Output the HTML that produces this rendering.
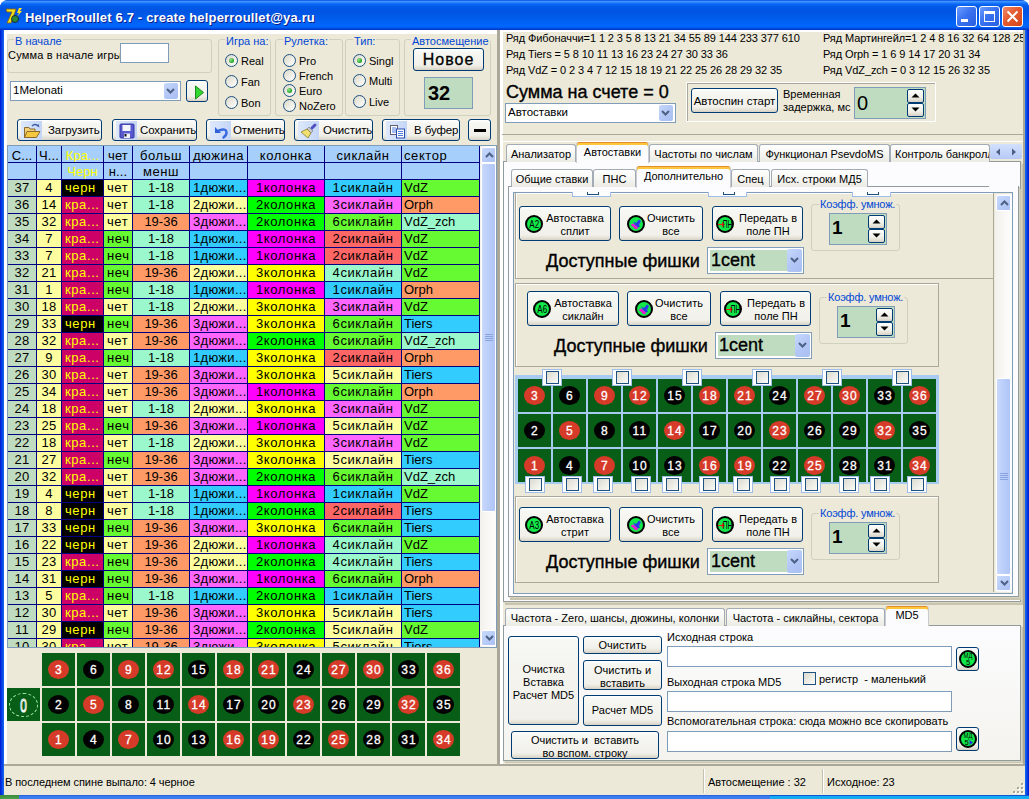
<!DOCTYPE html><html><head><meta charset="utf-8"><style>*{margin:0;padding:0;box-sizing:border-box}
html,body{width:1029px;height:799px;overflow:hidden;background:#fff}
body{position:relative;font-family:"Liberation Sans",sans-serif;font-size:11px;color:#000}
.a{position:absolute}
.t{white-space:nowrap;line-height:1}
.btn{border:1px solid #003c74;border-radius:3px;background:linear-gradient(#ffffff 0,#f7f7f3 3px,#f1f0ea calc(100% - 5px),#e4e0d5 calc(100% - 2px),#d6d0c5 100%)}
.fc{display:flex;align-items:center;justify-content:center;text-align:center}
.grp{border:1px solid #d0d0bf;border-radius:3px}
.gl{background:#ece9d8;color:#0046d5;padding:0 1px}
.edit{background:#fff;border:1px solid #7f9db9}
.rad{width:13px;height:13px;border-radius:50%;border:1px solid #1c5180;background:linear-gradient(135deg,#dcd9c9,#fff)}
.rad.on::after{content:"";position:absolute;left:3px;top:3px;width:5px;height:5px;border-radius:50%;background:radial-gradient(circle at 35% 35%,#8fe58f,#21a121 70%,#1a861a)}
.dd{background:linear-gradient(135deg,#c6d8fc,#b4c8f6 50%,#a8bff2);border-radius:2px}
.tab{border:1px solid #a3acb4;border-bottom:none;border-radius:3px 3px 0 0;background:linear-gradient(#fff,#f4f4f0 60%,#ebeae3)}
.tab.on{border-top:none;border-color:#c8ccd0;background:#fcfcfe;box-shadow:inset 0 1px 0 #e68b2c, inset 0 3px 0 #ffc83c}
</style></head><body><div class="a" style="left:0;top:0;width:1029px;height:799px;border-radius:8px 8px 0 0;background:linear-gradient(90deg,#0019cf,#0842e8 2px,#166aee 4px,#166aee 1025px,#0842e8 1027px,#0019cf)"></div>
<div class="a " style="left:0px;top:0px;width:1029px;height:30px;border-radius:8px 8px 0 0;background:linear-gradient(#0a48dc 0px,#3d95ff 1.5px,#2a84ff 2.5px,#0a68f6 4px,#0058e6 7px,#0055e2 12px,#005cec 18px,#0064f8 23px,#0066fc 27px,#0040d4 29px,#0030c4 30px)"></div>
<div class="a " style="left:0px;top:795px;width:1029px;height:4px;background:linear-gradient(#2458d8,#3b7ef0 40%,#3a7cec)"></div>
<div class="a " style="left:770px;top:795px;width:259px;height:4px;background:linear-gradient(#0a58d4 0,#0a58d4 1px,#12a8f2 1px,#16acf4)"></div>
<div class="a " style="left:0px;top:795px;width:19px;height:4px;background:linear-gradient(#3c8a3c,#4aa04a)"></div>
<svg class="a" style="left:5px;top:7px" width="18" height="18" viewBox="0 0 18 18">
<path d="M1 2 L11 2 L10 5 L6 16 L2 16 L7 5 L2 5 Z" fill="#f2e21a" stroke="#8a5a10" stroke-width="0.8"/>
<circle cx="10" cy="12" r="3.5" fill="#2a8a3a" stroke="#113" stroke-width="0.8"/>
<path d="M14 1 L12 6 L14 6 L12 10 L17 4 L15 4 L17 1Z" fill="#ffe020"/>
</svg>
<div class="a t " style="left:25px;top:11px;color:#fff;font-weight:bold;font-size:13px;letter-spacing:0.17px;text-shadow:1px 1px 0 #0a1e8c">HelperRoullet 6.7 - create helperroullet@ya.ru</div>
<div class="a " style="left:956px;top:6px;width:21px;height:21px;border:1px solid #fff;border-radius:3px;background:linear-gradient(135deg,#6a9cff,#3a72f0 45%,#2a5ee0)"><div class="a" style="left:4px;top:12px;width:7px;height:3px;background:#fff"></div></div>
<div class="a " style="left:979px;top:6px;width:21px;height:21px;border:1px solid #fff;border-radius:3px;background:linear-gradient(135deg,#6a9cff,#3a72f0 45%,#2a5ee0)"><div class="a" style="left:4px;top:4px;width:11px;height:11px;border:1px solid #fff;border-top:3px solid #fff"></div></div>
<div class="a " style="left:1002px;top:6px;width:21px;height:21px;border:1px solid #fff;border-radius:3px;background:linear-gradient(135deg,#f08a6a,#e45a2e 45%,#d4461a)"><svg width="21" height="21" style="position:absolute;left:0;top:0"><path d="M4.5 4.5 L14.5 14.5 M14.5 4.5 L4.5 14.5" stroke="#fff" stroke-width="2"/></svg></div>
<div class="a " style="left:4px;top:30px;width:1021px;height:765px;background:#ece9d8"></div>
<div class="a " style="left:4px;top:30px;width:496px;height:4px;background:#fff"></div>
<div class="a " style="left:4px;top:30px;width:3px;height:736px;background:#fff"></div>
<div class="a " style="left:497px;top:30px;width:3px;height:736px;background:#aca899"></div>
<div class="a " style="left:4px;top:764px;width:496px;height:2px;background:#aca899"></div>
<div class="a " style="left:500px;top:30px;width:3px;height:736px;background:#fff"></div>
<div class="a " style="left:500px;top:30px;width:525px;height:2px;background:#fff"></div>
<div class="a grp" style="left:7px;top:39px;width:205px;height:34px;"></div>
<div class="a t gl" style="left:14px;top:35px;font-size:11px;line-height:12px">В начале</div>
<div class="a t " style="left:8px;top:49px;font-size:11px;line-height:12px;letter-spacing:0.2px">Сумма в начале игры</div>
<div class="a edit" style="left:120px;top:43px;width:49px;height:20px;"></div>
<div class="a " style="left:10px;top:81px;width:171px;height:20px;background:#fff;border:1px solid #7f9db9"></div>
<div class="a t " style="left:13px;top:85.0px;font-size:11.5px">1Melonati</div>
<div class="a dd" style="left:164px;top:83px;width:14px;height:16px;"><svg class="a" style="left:2px;top:5px" width="9" height="6"><path d="M1 1 L4.5 4.5 L8 1" stroke="#4d6185" stroke-width="2" fill="none"/></svg></div>
<div class="a btn" style="left:186px;top:80px;width:22px;height:22px;"><svg class="a" style="left:8px;top:4px" width="10" height="15"><path d="M0.5 1 L8.5 7.5 L0.5 14 Z" fill="#33d633" stroke="#1a8a1a" stroke-width="1"/></svg></div>
<div class="a grp" style="left:218px;top:39px;width:53px;height:77px;"></div>
<div class="a t gl" style="left:225px;top:35px;font-size:11px;line-height:12px">Игра на:</div>
<div class="a grp" style="left:275px;top:39px;width:68px;height:77px;"></div>
<div class="a t gl" style="left:283px;top:35px;font-size:11px;line-height:12px">Рулетка:</div>
<div class="a grp" style="left:345px;top:39px;width:55px;height:77px;"></div>
<div class="a t gl" style="left:353px;top:35px;font-size:11px;line-height:12px">Тип:</div>
<div class="a grp" style="left:404px;top:39px;width:87px;height:77px;"></div>
<div class="a t gl" style="left:411px;top:35px;font-size:11px;line-height:12px">Автосмещение</div>
<div class="a rad on" style="left:225px;top:54px;width:13px;height:13px;"></div>
<div class="a t " style="left:241px;top:56px;font-size:11px">Real</div>
<div class="a rad" style="left:225px;top:75px;width:13px;height:13px;"></div>
<div class="a t " style="left:241px;top:77px;font-size:11px">Fan</div>
<div class="a rad" style="left:225px;top:96px;width:13px;height:13px;"></div>
<div class="a t " style="left:241px;top:98px;font-size:11px">Bon</div>
<div class="a rad" style="left:283px;top:54px;width:13px;height:13px;"></div>
<div class="a t " style="left:299px;top:56px;font-size:11px">Pro</div>
<div class="a rad" style="left:283px;top:69px;width:13px;height:13px;"></div>
<div class="a t " style="left:299px;top:71px;font-size:11px">French</div>
<div class="a rad on" style="left:283px;top:84px;width:13px;height:13px;"></div>
<div class="a t " style="left:299px;top:86px;font-size:11px">Euro</div>
<div class="a rad" style="left:283px;top:99px;width:13px;height:13px;"></div>
<div class="a t " style="left:299px;top:101px;font-size:11px">NoZero</div>
<div class="a rad on" style="left:353px;top:54px;width:13px;height:13px;"></div>
<div class="a t " style="left:369px;top:56px;font-size:11px">Singl</div>
<div class="a rad" style="left:353px;top:74px;width:13px;height:13px;"></div>
<div class="a t " style="left:369px;top:76px;font-size:11px">Multi</div>
<div class="a rad" style="left:353px;top:95px;width:13px;height:13px;"></div>
<div class="a t " style="left:369px;top:97px;font-size:11px">Live</div>
<div class="a btn fc" style="left:413px;top:48px;width:71px;height:23px;font-size:16px;letter-spacing:1px;padding-top:1px;-webkit-text-stroke:0.3px #000">Новое</div>
<div class="a " style="left:424px;top:77px;width:49px;height:32px;background:#c0dcc0;border:1px solid #7f9db9"></div>
<div class="a t " style="left:428px;top:83px;font-size:20px;font-weight:bold">32</div>
<div class="a btn" style="left:17px;top:119px;width:85px;height:22px;"><div class="a" style="left:3px;top:1px;width:21px;height:19px;background:linear-gradient(90deg,#dde8fb,#c4d6f6);display:flex;align-items:center;justify-content:center"><svg width="18" height="16" viewBox="0 0 18 16"><path d="M1.5 4.5 L6 4.5 L7 6 L12 6 L12 14.5 L1.5 14.5Z" fill="#f0d070" stroke="#8a6a30" stroke-width="1"/><path d="M4 8.5 L17 8.5 L13.5 14.5 L1.5 14.5Z" fill="#f6c840" stroke="#8a6a30" stroke-width="1"/><path d="M9 3 Q12 0 15 3" stroke="#3a5aa0" stroke-width="1.3" fill="none"/><path d="M13.5 2.5 L16.5 4.5 L15.5 1Z" fill="#3a5aa0"/></svg></div><div class="a t" style="left:30px;top:5px;font-size:11.5px;letter-spacing:-0.1px">Загрузить</div></div>
<div class="a btn" style="left:112px;top:119px;width:85px;height:22px;"><div class="a" style="left:3px;top:1px;width:21px;height:19px;background:linear-gradient(90deg,#dde8fb,#c4d6f6);display:flex;align-items:center;justify-content:center"><svg width="20" height="19" viewBox="0 0 20 19"><rect x="3" y="3" width="14" height="14" rx="1" fill="#5a5ad0" stroke="#3434a0" stroke-width="1"/><rect x="5.5" y="4" width="8" height="6" fill="#f4f4fc"/><rect x="7" y="12.5" width="6" height="4.5" fill="#f0f0f8"/><rect x="7.5" y="13" width="2" height="2.5" fill="#111"/></svg></div><div class="a t" style="left:27px;top:5px;font-size:11.5px;letter-spacing:-0.1px">Сохранить</div></div>
<div class="a btn" style="left:206px;top:119px;width:79px;height:22px;"><div class="a" style="left:3px;top:1px;width:21px;height:19px;background:linear-gradient(90deg,#dde8fb,#c4d6f6);display:flex;align-items:center;justify-content:center"><svg width="20" height="19" viewBox="0 0 20 19"><path d="M8 9.5 Q15 7 15.5 11 Q16 14 12.5 16.5" stroke="#3a6ae0" stroke-width="2.4" fill="none" stroke-linecap="round"/><path d="M4 6 L4 12 L10 12Z" fill="#3060d8"/></svg></div><div class="a t" style="left:26px;top:5px;font-size:11.5px;letter-spacing:-0.1px">Отменить</div></div>
<div class="a btn" style="left:294px;top:119px;width:79px;height:22px;"><div class="a" style="left:3px;top:1px;width:21px;height:19px;background:linear-gradient(90deg,#dde8fb,#c4d6f6);display:flex;align-items:center;justify-content:center"><svg width="21" height="19" viewBox="0 0 21 19"><path d="M14 7 L17 4" stroke="#5050c0" stroke-width="3" stroke-linecap="round"/><path d="M11 6 L15 10 L13 12 L9 8Z" fill="#c8c8d0" stroke="#707080" stroke-width="0.6"/><path d="M9 8 L13 12 L10 17 L3 11Z" fill="#f0e070" stroke="#8a7a30" stroke-width="0.8"/></svg></div><div class="a t" style="left:28px;top:5px;font-size:11.5px;letter-spacing:-0.1px">Очистить</div></div>
<div class="a btn" style="left:382px;top:119px;width:78px;height:22px;"><div class="a" style="left:3px;top:1px;width:21px;height:19px;background:linear-gradient(90deg,#dde8fb,#c4d6f6);display:flex;align-items:center;justify-content:center"><svg width="21" height="19" viewBox="0 0 21 19"><rect x="4.5" y="4.5" width="7" height="9" fill="#fff" stroke="#606070"/><path d="M6 7 H10 M6 9 H10 M6 11 H10" stroke="#4a7ae0"/><rect x="10.5" y="8" width="8" height="9" fill="#fff" stroke="#2a4ab0"/><path d="M12 10.5 H17 M12 12.5 H17 M12 14.5 H17" stroke="#4a7ae0"/></svg></div><div class="a t" style="left:31px;top:5px;font-size:11.5px;letter-spacing:-0.1px">В буфер</div></div>
<div class="a btn" style="left:468px;top:119px;width:23px;height:22px;"><div class="a" style="left:5px;top:9px;width:12px;height:3px;background:#000"></div></div>
<div class="a" style="left:0;top:0;width:480px;height:647px;overflow:hidden"><div class="a" style="left:8px;top:146px;width:472px;height:501px;background:#000080"></div><div class="a" style="left:8px;top:146px;width:28px;height:16px;background:#a6d0fb;color:#000;font-size:13px;letter-spacing:0.1px;line-height:19px;text-align:center;white-space:nowrap;overflow:hidden">С...</div><div class="a" style="left:8px;top:163px;width:28px;height:16px;background:#a6d0fb;color:#000;font-size:13px;letter-spacing:0.1px;line-height:17px;text-align:center;white-space:nowrap;overflow:hidden"></div><div class="a" style="left:37px;top:146px;width:24px;height:16px;background:#a6d0fb;color:#000;font-size:13px;letter-spacing:0.1px;line-height:19px;text-align:center;white-space:nowrap;overflow:hidden">Ч...</div><div class="a" style="left:37px;top:163px;width:24px;height:16px;background:#a6d0fb;color:#000;font-size:13px;letter-spacing:0.1px;line-height:17px;text-align:center;white-space:nowrap;overflow:hidden"></div><div class="a" style="left:62px;top:146px;width:41px;height:16px;background:#a6d0fb;color:#ffff00;font-size:13px;letter-spacing:0.1px;line-height:19px;text-align:center;white-space:nowrap;overflow:hidden">Кра...</div><div class="a" style="left:62px;top:163px;width:41px;height:16px;background:#a6d0fb;color:#ffff00;font-size:13px;letter-spacing:0.1px;line-height:17px;text-align:center;white-space:nowrap;overflow:hidden">Черн</div><div class="a" style="left:104px;top:146px;width:28px;height:16px;background:#a6d0fb;color:#000;font-size:13px;letter-spacing:0.1px;line-height:19px;text-align:center;white-space:nowrap;overflow:hidden">чет</div><div class="a" style="left:104px;top:163px;width:28px;height:16px;background:#a6d0fb;color:#000;font-size:13px;letter-spacing:0.1px;line-height:17px;text-align:center;white-space:nowrap;overflow:hidden">н...</div><div class="a" style="left:133px;top:146px;width:56px;height:16px;background:#a6d0fb;color:#000;font-size:13px;letter-spacing:0.6px;line-height:19px;text-align:center;white-space:nowrap;overflow:hidden">больш</div><div class="a" style="left:133px;top:163px;width:56px;height:16px;background:#a6d0fb;color:#000;font-size:13px;letter-spacing:0.6px;line-height:17px;text-align:center;white-space:nowrap;overflow:hidden">менш</div><div class="a" style="left:190px;top:146px;width:57px;height:16px;background:#a6d0fb;color:#000;font-size:13px;letter-spacing:0.6px;line-height:19px;text-align:center;white-space:nowrap;overflow:hidden">дюжина</div><div class="a" style="left:190px;top:163px;width:57px;height:16px;background:#a6d0fb;color:#000;font-size:13px;letter-spacing:0.6px;line-height:17px;text-align:center;white-space:nowrap;overflow:hidden"></div><div class="a" style="left:248px;top:146px;width:76px;height:16px;background:#a6d0fb;color:#000;font-size:13px;letter-spacing:0.6px;line-height:19px;text-align:center;white-space:nowrap;overflow:hidden">колонка</div><div class="a" style="left:248px;top:163px;width:76px;height:16px;background:#a6d0fb;color:#000;font-size:13px;letter-spacing:0.6px;line-height:17px;text-align:center;white-space:nowrap;overflow:hidden"></div><div class="a" style="left:325px;top:146px;width:76px;height:16px;background:#a6d0fb;color:#000;font-size:13px;letter-spacing:0.6px;line-height:19px;text-align:center;white-space:nowrap;overflow:hidden">сиклайн</div><div class="a" style="left:325px;top:163px;width:76px;height:16px;background:#a6d0fb;color:#000;font-size:13px;letter-spacing:0.6px;line-height:17px;text-align:center;white-space:nowrap;overflow:hidden"></div><div class="a" style="left:402px;top:146px;width:77px;height:16px;background:#a6d0fb;color:#000;font-size:13px;letter-spacing:0.6px;line-height:19px;text-align:left;padding-left:2px;white-space:nowrap;overflow:hidden">сектор</div><div class="a" style="left:402px;top:163px;width:77px;height:16px;background:#a6d0fb;color:#000;font-size:13px;letter-spacing:0.6px;line-height:17px;text-align:left;padding-left:2px;white-space:nowrap;overflow:hidden"></div><div class="a" style="left:8px;top:180px;width:28px;height:16px;background:#c0dcc0;color:#000;font-size:13px;letter-spacing:0.3px;line-height:16px;text-align:center;white-space:nowrap;overflow:hidden">37</div><div class="a" style="left:37px;top:180px;width:24px;height:16px;background:#ffffa0;color:#000;font-size:13px;letter-spacing:0.3px;line-height:16px;text-align:center;white-space:nowrap;overflow:hidden">4</div><div class="a" style="left:62px;top:180px;width:41px;height:16px;background:#000;color:#ffff00;font-size:13px;letter-spacing:0.6px;line-height:16px;text-align:left;padding-left:3px;white-space:nowrap;overflow:hidden">черн</div><div class="a" style="left:104px;top:180px;width:28px;height:16px;background:#ffffa0;color:#000;font-size:13px;letter-spacing:0.6px;line-height:16px;text-align:left;padding-left:3px;white-space:nowrap;overflow:hidden">чет</div><div class="a" style="left:133px;top:180px;width:56px;height:16px;background:#9af8cc;color:#000;font-size:13px;letter-spacing:0px;line-height:16px;text-align:center;white-space:nowrap;overflow:hidden">1-18</div><div class="a" style="left:190px;top:180px;width:57px;height:16px;background:#33ccfe;color:#000;font-size:13px;letter-spacing:0.3px;line-height:16px;text-align:left;padding-left:3px;white-space:nowrap;overflow:hidden">1дюжи...</div><div class="a" style="left:248px;top:180px;width:76px;height:16px;background:#ff00ff;color:#000;font-size:13px;letter-spacing:0.6px;line-height:16px;text-align:center;white-space:nowrap;overflow:hidden">1колонка</div><div class="a" style="left:325px;top:180px;width:76px;height:16px;background:#33ccfe;color:#000;font-size:13px;letter-spacing:0.6px;line-height:16px;text-align:center;white-space:nowrap;overflow:hidden">1сиклайн</div><div class="a" style="left:402px;top:180px;width:77px;height:16px;background:#66fa33;color:#000;font-size:13px;letter-spacing:0px;line-height:16px;text-align:left;padding-left:2px;white-space:nowrap;overflow:hidden">VdZ</div><div class="a" style="left:8px;top:197px;width:28px;height:16px;background:#c0dcc0;color:#000;font-size:13px;letter-spacing:0.3px;line-height:16px;text-align:center;white-space:nowrap;overflow:hidden">36</div><div class="a" style="left:37px;top:197px;width:24px;height:16px;background:#ffffa0;color:#000;font-size:13px;letter-spacing:0.3px;line-height:16px;text-align:center;white-space:nowrap;overflow:hidden">14</div><div class="a" style="left:62px;top:197px;width:41px;height:16px;background:#cc0066;color:#ffff00;font-size:13px;letter-spacing:0.6px;line-height:16px;text-align:left;padding-left:3px;white-space:nowrap;overflow:hidden">кра...</div><div class="a" style="left:104px;top:197px;width:28px;height:16px;background:#ffffa0;color:#000;font-size:13px;letter-spacing:0.6px;line-height:16px;text-align:left;padding-left:3px;white-space:nowrap;overflow:hidden">чет</div><div class="a" style="left:133px;top:197px;width:56px;height:16px;background:#9af8cc;color:#000;font-size:13px;letter-spacing:0px;line-height:16px;text-align:center;white-space:nowrap;overflow:hidden">1-18</div><div class="a" style="left:190px;top:197px;width:57px;height:16px;background:#ffffa0;color:#000;font-size:13px;letter-spacing:0.3px;line-height:16px;text-align:left;padding-left:3px;white-space:nowrap;overflow:hidden">2дюжи...</div><div class="a" style="left:248px;top:197px;width:76px;height:16px;background:#00ff00;color:#000;font-size:13px;letter-spacing:0.6px;line-height:16px;text-align:center;white-space:nowrap;overflow:hidden">2колонка</div><div class="a" style="left:325px;top:197px;width:76px;height:16px;background:#ff66ff;color:#000;font-size:13px;letter-spacing:0.6px;line-height:16px;text-align:center;white-space:nowrap;overflow:hidden">3сиклайн</div><div class="a" style="left:402px;top:197px;width:77px;height:16px;background:#ff9a66;color:#000;font-size:13px;letter-spacing:0px;line-height:16px;text-align:left;padding-left:2px;white-space:nowrap;overflow:hidden">Orph</div><div class="a" style="left:8px;top:214px;width:28px;height:16px;background:#c0dcc0;color:#000;font-size:13px;letter-spacing:0.3px;line-height:16px;text-align:center;white-space:nowrap;overflow:hidden">35</div><div class="a" style="left:37px;top:214px;width:24px;height:16px;background:#ffffa0;color:#000;font-size:13px;letter-spacing:0.3px;line-height:16px;text-align:center;white-space:nowrap;overflow:hidden">32</div><div class="a" style="left:62px;top:214px;width:41px;height:16px;background:#cc0066;color:#ffff00;font-size:13px;letter-spacing:0.6px;line-height:16px;text-align:left;padding-left:3px;white-space:nowrap;overflow:hidden">кра...</div><div class="a" style="left:104px;top:214px;width:28px;height:16px;background:#ffffa0;color:#000;font-size:13px;letter-spacing:0.6px;line-height:16px;text-align:left;padding-left:3px;white-space:nowrap;overflow:hidden">чет</div><div class="a" style="left:133px;top:214px;width:56px;height:16px;background:#ff9a66;color:#000;font-size:13px;letter-spacing:0px;line-height:16px;text-align:center;white-space:nowrap;overflow:hidden">19-36</div><div class="a" style="left:190px;top:214px;width:57px;height:16px;background:#ff66ff;color:#000;font-size:13px;letter-spacing:0.3px;line-height:16px;text-align:left;padding-left:3px;white-space:nowrap;overflow:hidden">3дюжи...</div><div class="a" style="left:248px;top:214px;width:76px;height:16px;background:#00ff00;color:#000;font-size:13px;letter-spacing:0.6px;line-height:16px;text-align:center;white-space:nowrap;overflow:hidden">2колонка</div><div class="a" style="left:325px;top:214px;width:76px;height:16px;background:#66fa33;color:#000;font-size:13px;letter-spacing:0.6px;line-height:16px;text-align:center;white-space:nowrap;overflow:hidden">6сиклайн</div><div class="a" style="left:402px;top:214px;width:77px;height:16px;background:#9af8cc;color:#000;font-size:13px;letter-spacing:0px;line-height:16px;text-align:left;padding-left:2px;white-space:nowrap;overflow:hidden">VdZ_zch</div><div class="a" style="left:8px;top:231px;width:28px;height:16px;background:#c0dcc0;color:#000;font-size:13px;letter-spacing:0.3px;line-height:16px;text-align:center;white-space:nowrap;overflow:hidden">34</div><div class="a" style="left:37px;top:231px;width:24px;height:16px;background:#ffffa0;color:#000;font-size:13px;letter-spacing:0.3px;line-height:16px;text-align:center;white-space:nowrap;overflow:hidden">7</div><div class="a" style="left:62px;top:231px;width:41px;height:16px;background:#cc0066;color:#ffff00;font-size:13px;letter-spacing:0.6px;line-height:16px;text-align:left;padding-left:3px;white-space:nowrap;overflow:hidden">кра...</div><div class="a" style="left:104px;top:231px;width:28px;height:16px;background:#66fa33;color:#000;font-size:13px;letter-spacing:0.6px;line-height:16px;text-align:left;padding-left:3px;white-space:nowrap;overflow:hidden">неч</div><div class="a" style="left:133px;top:231px;width:56px;height:16px;background:#9af8cc;color:#000;font-size:13px;letter-spacing:0px;line-height:16px;text-align:center;white-space:nowrap;overflow:hidden">1-18</div><div class="a" style="left:190px;top:231px;width:57px;height:16px;background:#33ccfe;color:#000;font-size:13px;letter-spacing:0.3px;line-height:16px;text-align:left;padding-left:3px;white-space:nowrap;overflow:hidden">1дюжи...</div><div class="a" style="left:248px;top:231px;width:76px;height:16px;background:#ff00ff;color:#000;font-size:13px;letter-spacing:0.6px;line-height:16px;text-align:center;white-space:nowrap;overflow:hidden">1колонка</div><div class="a" style="left:325px;top:231px;width:76px;height:16px;background:#ff6666;color:#000;font-size:13px;letter-spacing:0.6px;line-height:16px;text-align:center;white-space:nowrap;overflow:hidden">2сиклайн</div><div class="a" style="left:402px;top:231px;width:77px;height:16px;background:#66fa33;color:#000;font-size:13px;letter-spacing:0px;line-height:16px;text-align:left;padding-left:2px;white-space:nowrap;overflow:hidden">VdZ</div><div class="a" style="left:8px;top:248px;width:28px;height:16px;background:#c0dcc0;color:#000;font-size:13px;letter-spacing:0.3px;line-height:16px;text-align:center;white-space:nowrap;overflow:hidden">33</div><div class="a" style="left:37px;top:248px;width:24px;height:16px;background:#ffffa0;color:#000;font-size:13px;letter-spacing:0.3px;line-height:16px;text-align:center;white-space:nowrap;overflow:hidden">7</div><div class="a" style="left:62px;top:248px;width:41px;height:16px;background:#cc0066;color:#ffff00;font-size:13px;letter-spacing:0.6px;line-height:16px;text-align:left;padding-left:3px;white-space:nowrap;overflow:hidden">кра...</div><div class="a" style="left:104px;top:248px;width:28px;height:16px;background:#66fa33;color:#000;font-size:13px;letter-spacing:0.6px;line-height:16px;text-align:left;padding-left:3px;white-space:nowrap;overflow:hidden">неч</div><div class="a" style="left:133px;top:248px;width:56px;height:16px;background:#9af8cc;color:#000;font-size:13px;letter-spacing:0px;line-height:16px;text-align:center;white-space:nowrap;overflow:hidden">1-18</div><div class="a" style="left:190px;top:248px;width:57px;height:16px;background:#33ccfe;color:#000;font-size:13px;letter-spacing:0.3px;line-height:16px;text-align:left;padding-left:3px;white-space:nowrap;overflow:hidden">1дюжи...</div><div class="a" style="left:248px;top:248px;width:76px;height:16px;background:#ff00ff;color:#000;font-size:13px;letter-spacing:0.6px;line-height:16px;text-align:center;white-space:nowrap;overflow:hidden">1колонка</div><div class="a" style="left:325px;top:248px;width:76px;height:16px;background:#ff6666;color:#000;font-size:13px;letter-spacing:0.6px;line-height:16px;text-align:center;white-space:nowrap;overflow:hidden">2сиклайн</div><div class="a" style="left:402px;top:248px;width:77px;height:16px;background:#66fa33;color:#000;font-size:13px;letter-spacing:0px;line-height:16px;text-align:left;padding-left:2px;white-space:nowrap;overflow:hidden">VdZ</div><div class="a" style="left:8px;top:265px;width:28px;height:16px;background:#c0dcc0;color:#000;font-size:13px;letter-spacing:0.3px;line-height:16px;text-align:center;white-space:nowrap;overflow:hidden">32</div><div class="a" style="left:37px;top:265px;width:24px;height:16px;background:#ffffa0;color:#000;font-size:13px;letter-spacing:0.3px;line-height:16px;text-align:center;white-space:nowrap;overflow:hidden">21</div><div class="a" style="left:62px;top:265px;width:41px;height:16px;background:#cc0066;color:#ffff00;font-size:13px;letter-spacing:0.6px;line-height:16px;text-align:left;padding-left:3px;white-space:nowrap;overflow:hidden">кра...</div><div class="a" style="left:104px;top:265px;width:28px;height:16px;background:#66fa33;color:#000;font-size:13px;letter-spacing:0.6px;line-height:16px;text-align:left;padding-left:3px;white-space:nowrap;overflow:hidden">неч</div><div class="a" style="left:133px;top:265px;width:56px;height:16px;background:#ff9a66;color:#000;font-size:13px;letter-spacing:0px;line-height:16px;text-align:center;white-space:nowrap;overflow:hidden">19-36</div><div class="a" style="left:190px;top:265px;width:57px;height:16px;background:#ffffa0;color:#000;font-size:13px;letter-spacing:0.3px;line-height:16px;text-align:left;padding-left:3px;white-space:nowrap;overflow:hidden">2дюжи...</div><div class="a" style="left:248px;top:265px;width:76px;height:16px;background:#ffff00;color:#000;font-size:13px;letter-spacing:0.6px;line-height:16px;text-align:center;white-space:nowrap;overflow:hidden">3колонка</div><div class="a" style="left:325px;top:265px;width:76px;height:16px;background:#9af8cc;color:#000;font-size:13px;letter-spacing:0.6px;line-height:16px;text-align:center;white-space:nowrap;overflow:hidden">4сиклайн</div><div class="a" style="left:402px;top:265px;width:77px;height:16px;background:#66fa33;color:#000;font-size:13px;letter-spacing:0px;line-height:16px;text-align:left;padding-left:2px;white-space:nowrap;overflow:hidden">VdZ</div><div class="a" style="left:8px;top:282px;width:28px;height:16px;background:#c0dcc0;color:#000;font-size:13px;letter-spacing:0.3px;line-height:16px;text-align:center;white-space:nowrap;overflow:hidden">31</div><div class="a" style="left:37px;top:282px;width:24px;height:16px;background:#ffffa0;color:#000;font-size:13px;letter-spacing:0.3px;line-height:16px;text-align:center;white-space:nowrap;overflow:hidden">1</div><div class="a" style="left:62px;top:282px;width:41px;height:16px;background:#cc0066;color:#ffff00;font-size:13px;letter-spacing:0.6px;line-height:16px;text-align:left;padding-left:3px;white-space:nowrap;overflow:hidden">кра...</div><div class="a" style="left:104px;top:282px;width:28px;height:16px;background:#66fa33;color:#000;font-size:13px;letter-spacing:0.6px;line-height:16px;text-align:left;padding-left:3px;white-space:nowrap;overflow:hidden">неч</div><div class="a" style="left:133px;top:282px;width:56px;height:16px;background:#9af8cc;color:#000;font-size:13px;letter-spacing:0px;line-height:16px;text-align:center;white-space:nowrap;overflow:hidden">1-18</div><div class="a" style="left:190px;top:282px;width:57px;height:16px;background:#33ccfe;color:#000;font-size:13px;letter-spacing:0.3px;line-height:16px;text-align:left;padding-left:3px;white-space:nowrap;overflow:hidden">1дюжи...</div><div class="a" style="left:248px;top:282px;width:76px;height:16px;background:#ff00ff;color:#000;font-size:13px;letter-spacing:0.6px;line-height:16px;text-align:center;white-space:nowrap;overflow:hidden">1колонка</div><div class="a" style="left:325px;top:282px;width:76px;height:16px;background:#33ccfe;color:#000;font-size:13px;letter-spacing:0.6px;line-height:16px;text-align:center;white-space:nowrap;overflow:hidden">1сиклайн</div><div class="a" style="left:402px;top:282px;width:77px;height:16px;background:#ff9a66;color:#000;font-size:13px;letter-spacing:0px;line-height:16px;text-align:left;padding-left:2px;white-space:nowrap;overflow:hidden">Orph</div><div class="a" style="left:8px;top:299px;width:28px;height:16px;background:#c0dcc0;color:#000;font-size:13px;letter-spacing:0.3px;line-height:16px;text-align:center;white-space:nowrap;overflow:hidden">30</div><div class="a" style="left:37px;top:299px;width:24px;height:16px;background:#ffffa0;color:#000;font-size:13px;letter-spacing:0.3px;line-height:16px;text-align:center;white-space:nowrap;overflow:hidden">18</div><div class="a" style="left:62px;top:299px;width:41px;height:16px;background:#cc0066;color:#ffff00;font-size:13px;letter-spacing:0.6px;line-height:16px;text-align:left;padding-left:3px;white-space:nowrap;overflow:hidden">кра...</div><div class="a" style="left:104px;top:299px;width:28px;height:16px;background:#ffffa0;color:#000;font-size:13px;letter-spacing:0.6px;line-height:16px;text-align:left;padding-left:3px;white-space:nowrap;overflow:hidden">чет</div><div class="a" style="left:133px;top:299px;width:56px;height:16px;background:#9af8cc;color:#000;font-size:13px;letter-spacing:0px;line-height:16px;text-align:center;white-space:nowrap;overflow:hidden">1-18</div><div class="a" style="left:190px;top:299px;width:57px;height:16px;background:#ffffa0;color:#000;font-size:13px;letter-spacing:0.3px;line-height:16px;text-align:left;padding-left:3px;white-space:nowrap;overflow:hidden">2дюжи...</div><div class="a" style="left:248px;top:299px;width:76px;height:16px;background:#ffff00;color:#000;font-size:13px;letter-spacing:0.6px;line-height:16px;text-align:center;white-space:nowrap;overflow:hidden">3колонка</div><div class="a" style="left:325px;top:299px;width:76px;height:16px;background:#ff66ff;color:#000;font-size:13px;letter-spacing:0.6px;line-height:16px;text-align:center;white-space:nowrap;overflow:hidden">3сиклайн</div><div class="a" style="left:402px;top:299px;width:77px;height:16px;background:#66fa33;color:#000;font-size:13px;letter-spacing:0px;line-height:16px;text-align:left;padding-left:2px;white-space:nowrap;overflow:hidden">VdZ</div><div class="a" style="left:8px;top:316px;width:28px;height:16px;background:#c0dcc0;color:#000;font-size:13px;letter-spacing:0.3px;line-height:16px;text-align:center;white-space:nowrap;overflow:hidden">29</div><div class="a" style="left:37px;top:316px;width:24px;height:16px;background:#ffffa0;color:#000;font-size:13px;letter-spacing:0.3px;line-height:16px;text-align:center;white-space:nowrap;overflow:hidden">33</div><div class="a" style="left:62px;top:316px;width:41px;height:16px;background:#000;color:#ffff00;font-size:13px;letter-spacing:0.6px;line-height:16px;text-align:left;padding-left:3px;white-space:nowrap;overflow:hidden">черн</div><div class="a" style="left:104px;top:316px;width:28px;height:16px;background:#66fa33;color:#000;font-size:13px;letter-spacing:0.6px;line-height:16px;text-align:left;padding-left:3px;white-space:nowrap;overflow:hidden">неч</div><div class="a" style="left:133px;top:316px;width:56px;height:16px;background:#ff9a66;color:#000;font-size:13px;letter-spacing:0px;line-height:16px;text-align:center;white-space:nowrap;overflow:hidden">19-36</div><div class="a" style="left:190px;top:316px;width:57px;height:16px;background:#ff66ff;color:#000;font-size:13px;letter-spacing:0.3px;line-height:16px;text-align:left;padding-left:3px;white-space:nowrap;overflow:hidden">3дюжи...</div><div class="a" style="left:248px;top:316px;width:76px;height:16px;background:#ffff00;color:#000;font-size:13px;letter-spacing:0.6px;line-height:16px;text-align:center;white-space:nowrap;overflow:hidden">3колонка</div><div class="a" style="left:325px;top:316px;width:76px;height:16px;background:#66fa33;color:#000;font-size:13px;letter-spacing:0.6px;line-height:16px;text-align:center;white-space:nowrap;overflow:hidden">6сиклайн</div><div class="a" style="left:402px;top:316px;width:77px;height:16px;background:#33ccfe;color:#000;font-size:13px;letter-spacing:0px;line-height:16px;text-align:left;padding-left:2px;white-space:nowrap;overflow:hidden">Tiers</div><div class="a" style="left:8px;top:333px;width:28px;height:16px;background:#c0dcc0;color:#000;font-size:13px;letter-spacing:0.3px;line-height:16px;text-align:center;white-space:nowrap;overflow:hidden">28</div><div class="a" style="left:37px;top:333px;width:24px;height:16px;background:#ffffa0;color:#000;font-size:13px;letter-spacing:0.3px;line-height:16px;text-align:center;white-space:nowrap;overflow:hidden">32</div><div class="a" style="left:62px;top:333px;width:41px;height:16px;background:#cc0066;color:#ffff00;font-size:13px;letter-spacing:0.6px;line-height:16px;text-align:left;padding-left:3px;white-space:nowrap;overflow:hidden">кра...</div><div class="a" style="left:104px;top:333px;width:28px;height:16px;background:#ffffa0;color:#000;font-size:13px;letter-spacing:0.6px;line-height:16px;text-align:left;padding-left:3px;white-space:nowrap;overflow:hidden">чет</div><div class="a" style="left:133px;top:333px;width:56px;height:16px;background:#ff9a66;color:#000;font-size:13px;letter-spacing:0px;line-height:16px;text-align:center;white-space:nowrap;overflow:hidden">19-36</div><div class="a" style="left:190px;top:333px;width:57px;height:16px;background:#ff66ff;color:#000;font-size:13px;letter-spacing:0.3px;line-height:16px;text-align:left;padding-left:3px;white-space:nowrap;overflow:hidden">3дюжи...</div><div class="a" style="left:248px;top:333px;width:76px;height:16px;background:#00ff00;color:#000;font-size:13px;letter-spacing:0.6px;line-height:16px;text-align:center;white-space:nowrap;overflow:hidden">2колонка</div><div class="a" style="left:325px;top:333px;width:76px;height:16px;background:#66fa33;color:#000;font-size:13px;letter-spacing:0.6px;line-height:16px;text-align:center;white-space:nowrap;overflow:hidden">6сиклайн</div><div class="a" style="left:402px;top:333px;width:77px;height:16px;background:#9af8cc;color:#000;font-size:13px;letter-spacing:0px;line-height:16px;text-align:left;padding-left:2px;white-space:nowrap;overflow:hidden">VdZ_zch</div><div class="a" style="left:8px;top:350px;width:28px;height:16px;background:#c0dcc0;color:#000;font-size:13px;letter-spacing:0.3px;line-height:16px;text-align:center;white-space:nowrap;overflow:hidden">27</div><div class="a" style="left:37px;top:350px;width:24px;height:16px;background:#ffffa0;color:#000;font-size:13px;letter-spacing:0.3px;line-height:16px;text-align:center;white-space:nowrap;overflow:hidden">9</div><div class="a" style="left:62px;top:350px;width:41px;height:16px;background:#cc0066;color:#ffff00;font-size:13px;letter-spacing:0.6px;line-height:16px;text-align:left;padding-left:3px;white-space:nowrap;overflow:hidden">кра...</div><div class="a" style="left:104px;top:350px;width:28px;height:16px;background:#66fa33;color:#000;font-size:13px;letter-spacing:0.6px;line-height:16px;text-align:left;padding-left:3px;white-space:nowrap;overflow:hidden">неч</div><div class="a" style="left:133px;top:350px;width:56px;height:16px;background:#9af8cc;color:#000;font-size:13px;letter-spacing:0px;line-height:16px;text-align:center;white-space:nowrap;overflow:hidden">1-18</div><div class="a" style="left:190px;top:350px;width:57px;height:16px;background:#33ccfe;color:#000;font-size:13px;letter-spacing:0.3px;line-height:16px;text-align:left;padding-left:3px;white-space:nowrap;overflow:hidden">1дюжи...</div><div class="a" style="left:248px;top:350px;width:76px;height:16px;background:#ffff00;color:#000;font-size:13px;letter-spacing:0.6px;line-height:16px;text-align:center;white-space:nowrap;overflow:hidden">3колонка</div><div class="a" style="left:325px;top:350px;width:76px;height:16px;background:#ff6666;color:#000;font-size:13px;letter-spacing:0.6px;line-height:16px;text-align:center;white-space:nowrap;overflow:hidden">2сиклайн</div><div class="a" style="left:402px;top:350px;width:77px;height:16px;background:#ff9a66;color:#000;font-size:13px;letter-spacing:0px;line-height:16px;text-align:left;padding-left:2px;white-space:nowrap;overflow:hidden">Orph</div><div class="a" style="left:8px;top:367px;width:28px;height:16px;background:#c0dcc0;color:#000;font-size:13px;letter-spacing:0.3px;line-height:16px;text-align:center;white-space:nowrap;overflow:hidden">26</div><div class="a" style="left:37px;top:367px;width:24px;height:16px;background:#ffffa0;color:#000;font-size:13px;letter-spacing:0.3px;line-height:16px;text-align:center;white-space:nowrap;overflow:hidden">30</div><div class="a" style="left:62px;top:367px;width:41px;height:16px;background:#cc0066;color:#ffff00;font-size:13px;letter-spacing:0.6px;line-height:16px;text-align:left;padding-left:3px;white-space:nowrap;overflow:hidden">кра...</div><div class="a" style="left:104px;top:367px;width:28px;height:16px;background:#ffffa0;color:#000;font-size:13px;letter-spacing:0.6px;line-height:16px;text-align:left;padding-left:3px;white-space:nowrap;overflow:hidden">чет</div><div class="a" style="left:133px;top:367px;width:56px;height:16px;background:#ff9a66;color:#000;font-size:13px;letter-spacing:0px;line-height:16px;text-align:center;white-space:nowrap;overflow:hidden">19-36</div><div class="a" style="left:190px;top:367px;width:57px;height:16px;background:#ff66ff;color:#000;font-size:13px;letter-spacing:0.3px;line-height:16px;text-align:left;padding-left:3px;white-space:nowrap;overflow:hidden">3дюжи...</div><div class="a" style="left:248px;top:367px;width:76px;height:16px;background:#ffff00;color:#000;font-size:13px;letter-spacing:0.6px;line-height:16px;text-align:center;white-space:nowrap;overflow:hidden">3колонка</div><div class="a" style="left:325px;top:367px;width:76px;height:16px;background:#ffffa0;color:#000;font-size:13px;letter-spacing:0.6px;line-height:16px;text-align:center;white-space:nowrap;overflow:hidden">5сиклайн</div><div class="a" style="left:402px;top:367px;width:77px;height:16px;background:#33ccfe;color:#000;font-size:13px;letter-spacing:0px;line-height:16px;text-align:left;padding-left:2px;white-space:nowrap;overflow:hidden">Tiers</div><div class="a" style="left:8px;top:384px;width:28px;height:16px;background:#c0dcc0;color:#000;font-size:13px;letter-spacing:0.3px;line-height:16px;text-align:center;white-space:nowrap;overflow:hidden">25</div><div class="a" style="left:37px;top:384px;width:24px;height:16px;background:#ffffa0;color:#000;font-size:13px;letter-spacing:0.3px;line-height:16px;text-align:center;white-space:nowrap;overflow:hidden">34</div><div class="a" style="left:62px;top:384px;width:41px;height:16px;background:#cc0066;color:#ffff00;font-size:13px;letter-spacing:0.6px;line-height:16px;text-align:left;padding-left:3px;white-space:nowrap;overflow:hidden">кра...</div><div class="a" style="left:104px;top:384px;width:28px;height:16px;background:#ffffa0;color:#000;font-size:13px;letter-spacing:0.6px;line-height:16px;text-align:left;padding-left:3px;white-space:nowrap;overflow:hidden">чет</div><div class="a" style="left:133px;top:384px;width:56px;height:16px;background:#ff9a66;color:#000;font-size:13px;letter-spacing:0px;line-height:16px;text-align:center;white-space:nowrap;overflow:hidden">19-36</div><div class="a" style="left:190px;top:384px;width:57px;height:16px;background:#ff66ff;color:#000;font-size:13px;letter-spacing:0.3px;line-height:16px;text-align:left;padding-left:3px;white-space:nowrap;overflow:hidden">3дюжи...</div><div class="a" style="left:248px;top:384px;width:76px;height:16px;background:#ff00ff;color:#000;font-size:13px;letter-spacing:0.6px;line-height:16px;text-align:center;white-space:nowrap;overflow:hidden">1колонка</div><div class="a" style="left:325px;top:384px;width:76px;height:16px;background:#66fa33;color:#000;font-size:13px;letter-spacing:0.6px;line-height:16px;text-align:center;white-space:nowrap;overflow:hidden">6сиклайн</div><div class="a" style="left:402px;top:384px;width:77px;height:16px;background:#ff9a66;color:#000;font-size:13px;letter-spacing:0px;line-height:16px;text-align:left;padding-left:2px;white-space:nowrap;overflow:hidden">Orph</div><div class="a" style="left:8px;top:401px;width:28px;height:16px;background:#c0dcc0;color:#000;font-size:13px;letter-spacing:0.3px;line-height:16px;text-align:center;white-space:nowrap;overflow:hidden">24</div><div class="a" style="left:37px;top:401px;width:24px;height:16px;background:#ffffa0;color:#000;font-size:13px;letter-spacing:0.3px;line-height:16px;text-align:center;white-space:nowrap;overflow:hidden">18</div><div class="a" style="left:62px;top:401px;width:41px;height:16px;background:#cc0066;color:#ffff00;font-size:13px;letter-spacing:0.6px;line-height:16px;text-align:left;padding-left:3px;white-space:nowrap;overflow:hidden">кра...</div><div class="a" style="left:104px;top:401px;width:28px;height:16px;background:#ffffa0;color:#000;font-size:13px;letter-spacing:0.6px;line-height:16px;text-align:left;padding-left:3px;white-space:nowrap;overflow:hidden">чет</div><div class="a" style="left:133px;top:401px;width:56px;height:16px;background:#9af8cc;color:#000;font-size:13px;letter-spacing:0px;line-height:16px;text-align:center;white-space:nowrap;overflow:hidden">1-18</div><div class="a" style="left:190px;top:401px;width:57px;height:16px;background:#ffffa0;color:#000;font-size:13px;letter-spacing:0.3px;line-height:16px;text-align:left;padding-left:3px;white-space:nowrap;overflow:hidden">2дюжи...</div><div class="a" style="left:248px;top:401px;width:76px;height:16px;background:#ffff00;color:#000;font-size:13px;letter-spacing:0.6px;line-height:16px;text-align:center;white-space:nowrap;overflow:hidden">3колонка</div><div class="a" style="left:325px;top:401px;width:76px;height:16px;background:#ff66ff;color:#000;font-size:13px;letter-spacing:0.6px;line-height:16px;text-align:center;white-space:nowrap;overflow:hidden">3сиклайн</div><div class="a" style="left:402px;top:401px;width:77px;height:16px;background:#66fa33;color:#000;font-size:13px;letter-spacing:0px;line-height:16px;text-align:left;padding-left:2px;white-space:nowrap;overflow:hidden">VdZ</div><div class="a" style="left:8px;top:418px;width:28px;height:16px;background:#c0dcc0;color:#000;font-size:13px;letter-spacing:0.3px;line-height:16px;text-align:center;white-space:nowrap;overflow:hidden">23</div><div class="a" style="left:37px;top:418px;width:24px;height:16px;background:#ffffa0;color:#000;font-size:13px;letter-spacing:0.3px;line-height:16px;text-align:center;white-space:nowrap;overflow:hidden">25</div><div class="a" style="left:62px;top:418px;width:41px;height:16px;background:#cc0066;color:#ffff00;font-size:13px;letter-spacing:0.6px;line-height:16px;text-align:left;padding-left:3px;white-space:nowrap;overflow:hidden">кра...</div><div class="a" style="left:104px;top:418px;width:28px;height:16px;background:#66fa33;color:#000;font-size:13px;letter-spacing:0.6px;line-height:16px;text-align:left;padding-left:3px;white-space:nowrap;overflow:hidden">неч</div><div class="a" style="left:133px;top:418px;width:56px;height:16px;background:#ff9a66;color:#000;font-size:13px;letter-spacing:0px;line-height:16px;text-align:center;white-space:nowrap;overflow:hidden">19-36</div><div class="a" style="left:190px;top:418px;width:57px;height:16px;background:#ff66ff;color:#000;font-size:13px;letter-spacing:0.3px;line-height:16px;text-align:left;padding-left:3px;white-space:nowrap;overflow:hidden">3дюжи...</div><div class="a" style="left:248px;top:418px;width:76px;height:16px;background:#ff00ff;color:#000;font-size:13px;letter-spacing:0.6px;line-height:16px;text-align:center;white-space:nowrap;overflow:hidden">1колонка</div><div class="a" style="left:325px;top:418px;width:76px;height:16px;background:#ffffa0;color:#000;font-size:13px;letter-spacing:0.6px;line-height:16px;text-align:center;white-space:nowrap;overflow:hidden">5сиклайн</div><div class="a" style="left:402px;top:418px;width:77px;height:16px;background:#66fa33;color:#000;font-size:13px;letter-spacing:0px;line-height:16px;text-align:left;padding-left:2px;white-space:nowrap;overflow:hidden">VdZ</div><div class="a" style="left:8px;top:435px;width:28px;height:16px;background:#c0dcc0;color:#000;font-size:13px;letter-spacing:0.3px;line-height:16px;text-align:center;white-space:nowrap;overflow:hidden">22</div><div class="a" style="left:37px;top:435px;width:24px;height:16px;background:#ffffa0;color:#000;font-size:13px;letter-spacing:0.3px;line-height:16px;text-align:center;white-space:nowrap;overflow:hidden">18</div><div class="a" style="left:62px;top:435px;width:41px;height:16px;background:#cc0066;color:#ffff00;font-size:13px;letter-spacing:0.6px;line-height:16px;text-align:left;padding-left:3px;white-space:nowrap;overflow:hidden">кра...</div><div class="a" style="left:104px;top:435px;width:28px;height:16px;background:#ffffa0;color:#000;font-size:13px;letter-spacing:0.6px;line-height:16px;text-align:left;padding-left:3px;white-space:nowrap;overflow:hidden">чет</div><div class="a" style="left:133px;top:435px;width:56px;height:16px;background:#9af8cc;color:#000;font-size:13px;letter-spacing:0px;line-height:16px;text-align:center;white-space:nowrap;overflow:hidden">1-18</div><div class="a" style="left:190px;top:435px;width:57px;height:16px;background:#ffffa0;color:#000;font-size:13px;letter-spacing:0.3px;line-height:16px;text-align:left;padding-left:3px;white-space:nowrap;overflow:hidden">2дюжи...</div><div class="a" style="left:248px;top:435px;width:76px;height:16px;background:#ffff00;color:#000;font-size:13px;letter-spacing:0.6px;line-height:16px;text-align:center;white-space:nowrap;overflow:hidden">3колонка</div><div class="a" style="left:325px;top:435px;width:76px;height:16px;background:#ff66ff;color:#000;font-size:13px;letter-spacing:0.6px;line-height:16px;text-align:center;white-space:nowrap;overflow:hidden">3сиклайн</div><div class="a" style="left:402px;top:435px;width:77px;height:16px;background:#66fa33;color:#000;font-size:13px;letter-spacing:0px;line-height:16px;text-align:left;padding-left:2px;white-space:nowrap;overflow:hidden">VdZ</div><div class="a" style="left:8px;top:452px;width:28px;height:16px;background:#c0dcc0;color:#000;font-size:13px;letter-spacing:0.3px;line-height:16px;text-align:center;white-space:nowrap;overflow:hidden">21</div><div class="a" style="left:37px;top:452px;width:24px;height:16px;background:#ffffa0;color:#000;font-size:13px;letter-spacing:0.3px;line-height:16px;text-align:center;white-space:nowrap;overflow:hidden">27</div><div class="a" style="left:62px;top:452px;width:41px;height:16px;background:#cc0066;color:#ffff00;font-size:13px;letter-spacing:0.6px;line-height:16px;text-align:left;padding-left:3px;white-space:nowrap;overflow:hidden">кра...</div><div class="a" style="left:104px;top:452px;width:28px;height:16px;background:#66fa33;color:#000;font-size:13px;letter-spacing:0.6px;line-height:16px;text-align:left;padding-left:3px;white-space:nowrap;overflow:hidden">неч</div><div class="a" style="left:133px;top:452px;width:56px;height:16px;background:#ff9a66;color:#000;font-size:13px;letter-spacing:0px;line-height:16px;text-align:center;white-space:nowrap;overflow:hidden">19-36</div><div class="a" style="left:190px;top:452px;width:57px;height:16px;background:#ff66ff;color:#000;font-size:13px;letter-spacing:0.3px;line-height:16px;text-align:left;padding-left:3px;white-space:nowrap;overflow:hidden">3дюжи...</div><div class="a" style="left:248px;top:452px;width:76px;height:16px;background:#ffff00;color:#000;font-size:13px;letter-spacing:0.6px;line-height:16px;text-align:center;white-space:nowrap;overflow:hidden">3колонка</div><div class="a" style="left:325px;top:452px;width:76px;height:16px;background:#ffffa0;color:#000;font-size:13px;letter-spacing:0.6px;line-height:16px;text-align:center;white-space:nowrap;overflow:hidden">5сиклайн</div><div class="a" style="left:402px;top:452px;width:77px;height:16px;background:#33ccfe;color:#000;font-size:13px;letter-spacing:0px;line-height:16px;text-align:left;padding-left:2px;white-space:nowrap;overflow:hidden">Tiers</div><div class="a" style="left:8px;top:469px;width:28px;height:16px;background:#c0dcc0;color:#000;font-size:13px;letter-spacing:0.3px;line-height:16px;text-align:center;white-space:nowrap;overflow:hidden">20</div><div class="a" style="left:37px;top:469px;width:24px;height:16px;background:#ffffa0;color:#000;font-size:13px;letter-spacing:0.3px;line-height:16px;text-align:center;white-space:nowrap;overflow:hidden">32</div><div class="a" style="left:62px;top:469px;width:41px;height:16px;background:#cc0066;color:#ffff00;font-size:13px;letter-spacing:0.6px;line-height:16px;text-align:left;padding-left:3px;white-space:nowrap;overflow:hidden">кра...</div><div class="a" style="left:104px;top:469px;width:28px;height:16px;background:#ffffa0;color:#000;font-size:13px;letter-spacing:0.6px;line-height:16px;text-align:left;padding-left:3px;white-space:nowrap;overflow:hidden">чет</div><div class="a" style="left:133px;top:469px;width:56px;height:16px;background:#ff9a66;color:#000;font-size:13px;letter-spacing:0px;line-height:16px;text-align:center;white-space:nowrap;overflow:hidden">19-36</div><div class="a" style="left:190px;top:469px;width:57px;height:16px;background:#ff66ff;color:#000;font-size:13px;letter-spacing:0.3px;line-height:16px;text-align:left;padding-left:3px;white-space:nowrap;overflow:hidden">3дюжи...</div><div class="a" style="left:248px;top:469px;width:76px;height:16px;background:#00ff00;color:#000;font-size:13px;letter-spacing:0.6px;line-height:16px;text-align:center;white-space:nowrap;overflow:hidden">2колонка</div><div class="a" style="left:325px;top:469px;width:76px;height:16px;background:#66fa33;color:#000;font-size:13px;letter-spacing:0.6px;line-height:16px;text-align:center;white-space:nowrap;overflow:hidden">6сиклайн</div><div class="a" style="left:402px;top:469px;width:77px;height:16px;background:#9af8cc;color:#000;font-size:13px;letter-spacing:0px;line-height:16px;text-align:left;padding-left:2px;white-space:nowrap;overflow:hidden">VdZ_zch</div><div class="a" style="left:8px;top:486px;width:28px;height:16px;background:#c0dcc0;color:#000;font-size:13px;letter-spacing:0.3px;line-height:16px;text-align:center;white-space:nowrap;overflow:hidden">19</div><div class="a" style="left:37px;top:486px;width:24px;height:16px;background:#ffffa0;color:#000;font-size:13px;letter-spacing:0.3px;line-height:16px;text-align:center;white-space:nowrap;overflow:hidden">4</div><div class="a" style="left:62px;top:486px;width:41px;height:16px;background:#000;color:#ffff00;font-size:13px;letter-spacing:0.6px;line-height:16px;text-align:left;padding-left:3px;white-space:nowrap;overflow:hidden">черн</div><div class="a" style="left:104px;top:486px;width:28px;height:16px;background:#ffffa0;color:#000;font-size:13px;letter-spacing:0.6px;line-height:16px;text-align:left;padding-left:3px;white-space:nowrap;overflow:hidden">чет</div><div class="a" style="left:133px;top:486px;width:56px;height:16px;background:#9af8cc;color:#000;font-size:13px;letter-spacing:0px;line-height:16px;text-align:center;white-space:nowrap;overflow:hidden">1-18</div><div class="a" style="left:190px;top:486px;width:57px;height:16px;background:#33ccfe;color:#000;font-size:13px;letter-spacing:0.3px;line-height:16px;text-align:left;padding-left:3px;white-space:nowrap;overflow:hidden">1дюжи...</div><div class="a" style="left:248px;top:486px;width:76px;height:16px;background:#ff00ff;color:#000;font-size:13px;letter-spacing:0.6px;line-height:16px;text-align:center;white-space:nowrap;overflow:hidden">1колонка</div><div class="a" style="left:325px;top:486px;width:76px;height:16px;background:#33ccfe;color:#000;font-size:13px;letter-spacing:0.6px;line-height:16px;text-align:center;white-space:nowrap;overflow:hidden">1сиклайн</div><div class="a" style="left:402px;top:486px;width:77px;height:16px;background:#66fa33;color:#000;font-size:13px;letter-spacing:0px;line-height:16px;text-align:left;padding-left:2px;white-space:nowrap;overflow:hidden">VdZ</div><div class="a" style="left:8px;top:503px;width:28px;height:16px;background:#c0dcc0;color:#000;font-size:13px;letter-spacing:0.3px;line-height:16px;text-align:center;white-space:nowrap;overflow:hidden">18</div><div class="a" style="left:37px;top:503px;width:24px;height:16px;background:#ffffa0;color:#000;font-size:13px;letter-spacing:0.3px;line-height:16px;text-align:center;white-space:nowrap;overflow:hidden">8</div><div class="a" style="left:62px;top:503px;width:41px;height:16px;background:#000;color:#ffff00;font-size:13px;letter-spacing:0.6px;line-height:16px;text-align:left;padding-left:3px;white-space:nowrap;overflow:hidden">черн</div><div class="a" style="left:104px;top:503px;width:28px;height:16px;background:#ffffa0;color:#000;font-size:13px;letter-spacing:0.6px;line-height:16px;text-align:left;padding-left:3px;white-space:nowrap;overflow:hidden">чет</div><div class="a" style="left:133px;top:503px;width:56px;height:16px;background:#9af8cc;color:#000;font-size:13px;letter-spacing:0px;line-height:16px;text-align:center;white-space:nowrap;overflow:hidden">1-18</div><div class="a" style="left:190px;top:503px;width:57px;height:16px;background:#33ccfe;color:#000;font-size:13px;letter-spacing:0.3px;line-height:16px;text-align:left;padding-left:3px;white-space:nowrap;overflow:hidden">1дюжи...</div><div class="a" style="left:248px;top:503px;width:76px;height:16px;background:#00ff00;color:#000;font-size:13px;letter-spacing:0.6px;line-height:16px;text-align:center;white-space:nowrap;overflow:hidden">2колонка</div><div class="a" style="left:325px;top:503px;width:76px;height:16px;background:#ff6666;color:#000;font-size:13px;letter-spacing:0.6px;line-height:16px;text-align:center;white-space:nowrap;overflow:hidden">2сиклайн</div><div class="a" style="left:402px;top:503px;width:77px;height:16px;background:#33ccfe;color:#000;font-size:13px;letter-spacing:0px;line-height:16px;text-align:left;padding-left:2px;white-space:nowrap;overflow:hidden">Tiers</div><div class="a" style="left:8px;top:520px;width:28px;height:16px;background:#c0dcc0;color:#000;font-size:13px;letter-spacing:0.3px;line-height:16px;text-align:center;white-space:nowrap;overflow:hidden">17</div><div class="a" style="left:37px;top:520px;width:24px;height:16px;background:#ffffa0;color:#000;font-size:13px;letter-spacing:0.3px;line-height:16px;text-align:center;white-space:nowrap;overflow:hidden">33</div><div class="a" style="left:62px;top:520px;width:41px;height:16px;background:#000;color:#ffff00;font-size:13px;letter-spacing:0.6px;line-height:16px;text-align:left;padding-left:3px;white-space:nowrap;overflow:hidden">черн</div><div class="a" style="left:104px;top:520px;width:28px;height:16px;background:#66fa33;color:#000;font-size:13px;letter-spacing:0.6px;line-height:16px;text-align:left;padding-left:3px;white-space:nowrap;overflow:hidden">неч</div><div class="a" style="left:133px;top:520px;width:56px;height:16px;background:#ff9a66;color:#000;font-size:13px;letter-spacing:0px;line-height:16px;text-align:center;white-space:nowrap;overflow:hidden">19-36</div><div class="a" style="left:190px;top:520px;width:57px;height:16px;background:#ff66ff;color:#000;font-size:13px;letter-spacing:0.3px;line-height:16px;text-align:left;padding-left:3px;white-space:nowrap;overflow:hidden">3дюжи...</div><div class="a" style="left:248px;top:520px;width:76px;height:16px;background:#ffff00;color:#000;font-size:13px;letter-spacing:0.6px;line-height:16px;text-align:center;white-space:nowrap;overflow:hidden">3колонка</div><div class="a" style="left:325px;top:520px;width:76px;height:16px;background:#66fa33;color:#000;font-size:13px;letter-spacing:0.6px;line-height:16px;text-align:center;white-space:nowrap;overflow:hidden">6сиклайн</div><div class="a" style="left:402px;top:520px;width:77px;height:16px;background:#33ccfe;color:#000;font-size:13px;letter-spacing:0px;line-height:16px;text-align:left;padding-left:2px;white-space:nowrap;overflow:hidden">Tiers</div><div class="a" style="left:8px;top:537px;width:28px;height:16px;background:#c0dcc0;color:#000;font-size:13px;letter-spacing:0.3px;line-height:16px;text-align:center;white-space:nowrap;overflow:hidden">16</div><div class="a" style="left:37px;top:537px;width:24px;height:16px;background:#ffffa0;color:#000;font-size:13px;letter-spacing:0.3px;line-height:16px;text-align:center;white-space:nowrap;overflow:hidden">22</div><div class="a" style="left:62px;top:537px;width:41px;height:16px;background:#000;color:#ffff00;font-size:13px;letter-spacing:0.6px;line-height:16px;text-align:left;padding-left:3px;white-space:nowrap;overflow:hidden">черн</div><div class="a" style="left:104px;top:537px;width:28px;height:16px;background:#ffffa0;color:#000;font-size:13px;letter-spacing:0.6px;line-height:16px;text-align:left;padding-left:3px;white-space:nowrap;overflow:hidden">чет</div><div class="a" style="left:133px;top:537px;width:56px;height:16px;background:#ff9a66;color:#000;font-size:13px;letter-spacing:0px;line-height:16px;text-align:center;white-space:nowrap;overflow:hidden">19-36</div><div class="a" style="left:190px;top:537px;width:57px;height:16px;background:#ffffa0;color:#000;font-size:13px;letter-spacing:0.3px;line-height:16px;text-align:left;padding-left:3px;white-space:nowrap;overflow:hidden">2дюжи...</div><div class="a" style="left:248px;top:537px;width:76px;height:16px;background:#ff00ff;color:#000;font-size:13px;letter-spacing:0.6px;line-height:16px;text-align:center;white-space:nowrap;overflow:hidden">1колонка</div><div class="a" style="left:325px;top:537px;width:76px;height:16px;background:#9af8cc;color:#000;font-size:13px;letter-spacing:0.6px;line-height:16px;text-align:center;white-space:nowrap;overflow:hidden">4сиклайн</div><div class="a" style="left:402px;top:537px;width:77px;height:16px;background:#66fa33;color:#000;font-size:13px;letter-spacing:0px;line-height:16px;text-align:left;padding-left:2px;white-space:nowrap;overflow:hidden">VdZ</div><div class="a" style="left:8px;top:554px;width:28px;height:16px;background:#c0dcc0;color:#000;font-size:13px;letter-spacing:0.3px;line-height:16px;text-align:center;white-space:nowrap;overflow:hidden">15</div><div class="a" style="left:37px;top:554px;width:24px;height:16px;background:#ffffa0;color:#000;font-size:13px;letter-spacing:0.3px;line-height:16px;text-align:center;white-space:nowrap;overflow:hidden">23</div><div class="a" style="left:62px;top:554px;width:41px;height:16px;background:#cc0066;color:#ffff00;font-size:13px;letter-spacing:0.6px;line-height:16px;text-align:left;padding-left:3px;white-space:nowrap;overflow:hidden">кра...</div><div class="a" style="left:104px;top:554px;width:28px;height:16px;background:#66fa33;color:#000;font-size:13px;letter-spacing:0.6px;line-height:16px;text-align:left;padding-left:3px;white-space:nowrap;overflow:hidden">неч</div><div class="a" style="left:133px;top:554px;width:56px;height:16px;background:#ff9a66;color:#000;font-size:13px;letter-spacing:0px;line-height:16px;text-align:center;white-space:nowrap;overflow:hidden">19-36</div><div class="a" style="left:190px;top:554px;width:57px;height:16px;background:#ffffa0;color:#000;font-size:13px;letter-spacing:0.3px;line-height:16px;text-align:left;padding-left:3px;white-space:nowrap;overflow:hidden">2дюжи...</div><div class="a" style="left:248px;top:554px;width:76px;height:16px;background:#00ff00;color:#000;font-size:13px;letter-spacing:0.6px;line-height:16px;text-align:center;white-space:nowrap;overflow:hidden">2колонка</div><div class="a" style="left:325px;top:554px;width:76px;height:16px;background:#9af8cc;color:#000;font-size:13px;letter-spacing:0.6px;line-height:16px;text-align:center;white-space:nowrap;overflow:hidden">4сиклайн</div><div class="a" style="left:402px;top:554px;width:77px;height:16px;background:#33ccfe;color:#000;font-size:13px;letter-spacing:0px;line-height:16px;text-align:left;padding-left:2px;white-space:nowrap;overflow:hidden">Tiers</div><div class="a" style="left:8px;top:571px;width:28px;height:16px;background:#c0dcc0;color:#000;font-size:13px;letter-spacing:0.3px;line-height:16px;text-align:center;white-space:nowrap;overflow:hidden">14</div><div class="a" style="left:37px;top:571px;width:24px;height:16px;background:#ffffa0;color:#000;font-size:13px;letter-spacing:0.3px;line-height:16px;text-align:center;white-space:nowrap;overflow:hidden">31</div><div class="a" style="left:62px;top:571px;width:41px;height:16px;background:#000;color:#ffff00;font-size:13px;letter-spacing:0.6px;line-height:16px;text-align:left;padding-left:3px;white-space:nowrap;overflow:hidden">черн</div><div class="a" style="left:104px;top:571px;width:28px;height:16px;background:#66fa33;color:#000;font-size:13px;letter-spacing:0.6px;line-height:16px;text-align:left;padding-left:3px;white-space:nowrap;overflow:hidden">неч</div><div class="a" style="left:133px;top:571px;width:56px;height:16px;background:#ff9a66;color:#000;font-size:13px;letter-spacing:0px;line-height:16px;text-align:center;white-space:nowrap;overflow:hidden">19-36</div><div class="a" style="left:190px;top:571px;width:57px;height:16px;background:#ff66ff;color:#000;font-size:13px;letter-spacing:0.3px;line-height:16px;text-align:left;padding-left:3px;white-space:nowrap;overflow:hidden">3дюжи...</div><div class="a" style="left:248px;top:571px;width:76px;height:16px;background:#ff00ff;color:#000;font-size:13px;letter-spacing:0.6px;line-height:16px;text-align:center;white-space:nowrap;overflow:hidden">1колонка</div><div class="a" style="left:325px;top:571px;width:76px;height:16px;background:#66fa33;color:#000;font-size:13px;letter-spacing:0.6px;line-height:16px;text-align:center;white-space:nowrap;overflow:hidden">6сиклайн</div><div class="a" style="left:402px;top:571px;width:77px;height:16px;background:#ff9a66;color:#000;font-size:13px;letter-spacing:0px;line-height:16px;text-align:left;padding-left:2px;white-space:nowrap;overflow:hidden">Orph</div><div class="a" style="left:8px;top:588px;width:28px;height:16px;background:#c0dcc0;color:#000;font-size:13px;letter-spacing:0.3px;line-height:16px;text-align:center;white-space:nowrap;overflow:hidden">13</div><div class="a" style="left:37px;top:588px;width:24px;height:16px;background:#ffffa0;color:#000;font-size:13px;letter-spacing:0.3px;line-height:16px;text-align:center;white-space:nowrap;overflow:hidden">5</div><div class="a" style="left:62px;top:588px;width:41px;height:16px;background:#cc0066;color:#ffff00;font-size:13px;letter-spacing:0.6px;line-height:16px;text-align:left;padding-left:3px;white-space:nowrap;overflow:hidden">кра...</div><div class="a" style="left:104px;top:588px;width:28px;height:16px;background:#66fa33;color:#000;font-size:13px;letter-spacing:0.6px;line-height:16px;text-align:left;padding-left:3px;white-space:nowrap;overflow:hidden">неч</div><div class="a" style="left:133px;top:588px;width:56px;height:16px;background:#9af8cc;color:#000;font-size:13px;letter-spacing:0px;line-height:16px;text-align:center;white-space:nowrap;overflow:hidden">1-18</div><div class="a" style="left:190px;top:588px;width:57px;height:16px;background:#33ccfe;color:#000;font-size:13px;letter-spacing:0.3px;line-height:16px;text-align:left;padding-left:3px;white-space:nowrap;overflow:hidden">1дюжи...</div><div class="a" style="left:248px;top:588px;width:76px;height:16px;background:#00ff00;color:#000;font-size:13px;letter-spacing:0.6px;line-height:16px;text-align:center;white-space:nowrap;overflow:hidden">2колонка</div><div class="a" style="left:325px;top:588px;width:76px;height:16px;background:#33ccfe;color:#000;font-size:13px;letter-spacing:0.6px;line-height:16px;text-align:center;white-space:nowrap;overflow:hidden">1сиклайн</div><div class="a" style="left:402px;top:588px;width:77px;height:16px;background:#33ccfe;color:#000;font-size:13px;letter-spacing:0px;line-height:16px;text-align:left;padding-left:2px;white-space:nowrap;overflow:hidden">Tiers</div><div class="a" style="left:8px;top:605px;width:28px;height:16px;background:#c0dcc0;color:#000;font-size:13px;letter-spacing:0.3px;line-height:16px;text-align:center;white-space:nowrap;overflow:hidden">12</div><div class="a" style="left:37px;top:605px;width:24px;height:16px;background:#ffffa0;color:#000;font-size:13px;letter-spacing:0.3px;line-height:16px;text-align:center;white-space:nowrap;overflow:hidden">30</div><div class="a" style="left:62px;top:605px;width:41px;height:16px;background:#cc0066;color:#ffff00;font-size:13px;letter-spacing:0.6px;line-height:16px;text-align:left;padding-left:3px;white-space:nowrap;overflow:hidden">кра...</div><div class="a" style="left:104px;top:605px;width:28px;height:16px;background:#ffffa0;color:#000;font-size:13px;letter-spacing:0.6px;line-height:16px;text-align:left;padding-left:3px;white-space:nowrap;overflow:hidden">чет</div><div class="a" style="left:133px;top:605px;width:56px;height:16px;background:#ff9a66;color:#000;font-size:13px;letter-spacing:0px;line-height:16px;text-align:center;white-space:nowrap;overflow:hidden">19-36</div><div class="a" style="left:190px;top:605px;width:57px;height:16px;background:#ff66ff;color:#000;font-size:13px;letter-spacing:0.3px;line-height:16px;text-align:left;padding-left:3px;white-space:nowrap;overflow:hidden">3дюжи...</div><div class="a" style="left:248px;top:605px;width:76px;height:16px;background:#ffff00;color:#000;font-size:13px;letter-spacing:0.6px;line-height:16px;text-align:center;white-space:nowrap;overflow:hidden">3колонка</div><div class="a" style="left:325px;top:605px;width:76px;height:16px;background:#ffffa0;color:#000;font-size:13px;letter-spacing:0.6px;line-height:16px;text-align:center;white-space:nowrap;overflow:hidden">5сиклайн</div><div class="a" style="left:402px;top:605px;width:77px;height:16px;background:#33ccfe;color:#000;font-size:13px;letter-spacing:0px;line-height:16px;text-align:left;padding-left:2px;white-space:nowrap;overflow:hidden">Tiers</div><div class="a" style="left:8px;top:622px;width:28px;height:16px;background:#c0dcc0;color:#000;font-size:13px;letter-spacing:0.3px;line-height:16px;text-align:center;white-space:nowrap;overflow:hidden">11</div><div class="a" style="left:37px;top:622px;width:24px;height:16px;background:#ffffa0;color:#000;font-size:13px;letter-spacing:0.3px;line-height:16px;text-align:center;white-space:nowrap;overflow:hidden">29</div><div class="a" style="left:62px;top:622px;width:41px;height:16px;background:#000;color:#ffff00;font-size:13px;letter-spacing:0.6px;line-height:16px;text-align:left;padding-left:3px;white-space:nowrap;overflow:hidden">черн</div><div class="a" style="left:104px;top:622px;width:28px;height:16px;background:#66fa33;color:#000;font-size:13px;letter-spacing:0.6px;line-height:16px;text-align:left;padding-left:3px;white-space:nowrap;overflow:hidden">неч</div><div class="a" style="left:133px;top:622px;width:56px;height:16px;background:#ff9a66;color:#000;font-size:13px;letter-spacing:0px;line-height:16px;text-align:center;white-space:nowrap;overflow:hidden">19-36</div><div class="a" style="left:190px;top:622px;width:57px;height:16px;background:#ff66ff;color:#000;font-size:13px;letter-spacing:0.3px;line-height:16px;text-align:left;padding-left:3px;white-space:nowrap;overflow:hidden">3дюжи...</div><div class="a" style="left:248px;top:622px;width:76px;height:16px;background:#00ff00;color:#000;font-size:13px;letter-spacing:0.6px;line-height:16px;text-align:center;white-space:nowrap;overflow:hidden">2колонка</div><div class="a" style="left:325px;top:622px;width:76px;height:16px;background:#ffffa0;color:#000;font-size:13px;letter-spacing:0.6px;line-height:16px;text-align:center;white-space:nowrap;overflow:hidden">5сиклайн</div><div class="a" style="left:402px;top:622px;width:77px;height:16px;background:#66fa33;color:#000;font-size:13px;letter-spacing:0px;line-height:16px;text-align:left;padding-left:2px;white-space:nowrap;overflow:hidden">VdZ</div><div class="a" style="left:8px;top:639px;width:28px;height:16px;background:#c0dcc0;color:#000;font-size:13px;letter-spacing:0.3px;line-height:16px;text-align:center;white-space:nowrap;overflow:hidden">10</div><div class="a" style="left:37px;top:639px;width:24px;height:16px;background:#ffffa0;color:#000;font-size:13px;letter-spacing:0.3px;line-height:16px;text-align:center;white-space:nowrap;overflow:hidden">30</div><div class="a" style="left:62px;top:639px;width:41px;height:16px;background:#cc0066;color:#ffff00;font-size:13px;letter-spacing:0.6px;line-height:16px;text-align:left;padding-left:3px;white-space:nowrap;overflow:hidden">кра...</div><div class="a" style="left:104px;top:639px;width:28px;height:16px;background:#ffffa0;color:#000;font-size:13px;letter-spacing:0.6px;line-height:16px;text-align:left;padding-left:3px;white-space:nowrap;overflow:hidden">чет</div><div class="a" style="left:133px;top:639px;width:56px;height:16px;background:#ff9a66;color:#000;font-size:13px;letter-spacing:0px;line-height:16px;text-align:center;white-space:nowrap;overflow:hidden">19-36</div><div class="a" style="left:190px;top:639px;width:57px;height:16px;background:#ff66ff;color:#000;font-size:13px;letter-spacing:0.3px;line-height:16px;text-align:left;padding-left:3px;white-space:nowrap;overflow:hidden">3дюжи...</div><div class="a" style="left:248px;top:639px;width:76px;height:16px;background:#ffff00;color:#000;font-size:13px;letter-spacing:0.6px;line-height:16px;text-align:center;white-space:nowrap;overflow:hidden">3колонка</div><div class="a" style="left:325px;top:639px;width:76px;height:16px;background:#ffffa0;color:#000;font-size:13px;letter-spacing:0.6px;line-height:16px;text-align:center;white-space:nowrap;overflow:hidden">5сиклайн</div><div class="a" style="left:402px;top:639px;width:77px;height:16px;background:#33ccfe;color:#000;font-size:13px;letter-spacing:0px;line-height:16px;text-align:left;padding-left:2px;white-space:nowrap;overflow:hidden">Tiers</div></div>
<div class="a " style="left:480px;top:146px;width:17px;height:501px;background:linear-gradient(90deg,#f3f1ec,#fefefe)"></div>
<div class="a " style="left:481px;top:147px;width:15px;height:16px;border:1px solid #fff;border-radius:2px;background:linear-gradient(135deg,#c8d9fc,#b6cbf7 60%,#aac0f3)"><svg class="a" style="left:3px;top:4px" width="9" height="6"><path d="M1 5 L4.5 1.5 L8 5" stroke="#4d6185" stroke-width="2" fill="none"/></svg></div>
<div class="a " style="left:481px;top:630px;width:15px;height:16px;border:1px solid #fff;border-radius:2px;background:linear-gradient(135deg,#c8d9fc,#b6cbf7 60%,#aac0f3)"><svg class="a" style="left:3px;top:4px" width="9" height="6"><path d="M1 1 L4.5 4.5 L8 1" stroke="#4d6185" stroke-width="2" fill="none"/></svg></div>
<div class="a " style="left:481px;top:163px;width:15px;height:349px;border:1px solid #fff;border-radius:2px;background:linear-gradient(90deg,#c9d8fc,#bacefa 50%,#b0c4f6)"><div class="a" style="left:3px;top:170px;width:8px;height:1px;background:#8aa4e0"></div><div class="a" style="left:3px;top:172px;width:8px;height:1px;background:#8aa4e0"></div><div class="a" style="left:3px;top:174px;width:8px;height:1px;background:#8aa4e0"></div><div class="a" style="left:3px;top:176px;width:8px;height:1px;background:#8aa4e0"></div></div>
<div class="a " style="left:7px;top:647px;width:490px;height:1px;background:#7f9db9"></div>
<div class="a " style="left:496px;top:145px;width:1px;height:503px;background:#7f9db9"></div>
<div class="a " style="left:7px;top:145px;width:490px;height:1px;background:#7f9db9"></div>
<div class="a " style="left:7px;top:145px;width:1px;height:503px;background:#7f9db9"></div>
<div class="a" style="left:42px;top:653px;width:33px;height:33px;background:#085e16"><div class="a" style="left:6px;top:7px;width:21px;height:19px;border-radius:50%;background:#d63a28"></div><div class="a t" style="left:0;top:11px;left:0.5px;width:33px;text-align:center;color:#fff;font-weight:normal;-webkit-text-stroke:0.3px #fff;font-size:12px;font-family:'Liberation Sans',sans-serif;letter-spacing:1.2px">3</div></div><div class="a" style="left:77px;top:653px;width:33px;height:33px;background:#085e16"><div class="a" style="left:6px;top:7px;width:21px;height:19px;border-radius:50%;background:#000"></div><div class="a t" style="left:0;top:11px;left:0.5px;width:33px;text-align:center;color:#fff;font-weight:normal;-webkit-text-stroke:0.3px #fff;font-size:12px;font-family:'Liberation Sans',sans-serif;letter-spacing:1.2px">6</div></div><div class="a" style="left:112px;top:653px;width:33px;height:33px;background:#085e16"><div class="a" style="left:6px;top:7px;width:21px;height:19px;border-radius:50%;background:#d63a28"></div><div class="a t" style="left:0;top:11px;left:0.5px;width:33px;text-align:center;color:#fff;font-weight:normal;-webkit-text-stroke:0.3px #fff;font-size:12px;font-family:'Liberation Sans',sans-serif;letter-spacing:1.2px">9</div></div><div class="a" style="left:147px;top:653px;width:33px;height:33px;background:#085e16"><div class="a" style="left:6px;top:7px;width:21px;height:19px;border-radius:50%;background:#d63a28"></div><div class="a t" style="left:0;top:11px;left:0.5px;width:33px;text-align:center;color:#fff;font-weight:normal;-webkit-text-stroke:0.3px #fff;font-size:12px;font-family:'Liberation Sans',sans-serif;letter-spacing:1.2px">12</div></div><div class="a" style="left:182px;top:653px;width:33px;height:33px;background:#085e16"><div class="a" style="left:6px;top:7px;width:21px;height:19px;border-radius:50%;background:#000"></div><div class="a t" style="left:0;top:11px;left:0.5px;width:33px;text-align:center;color:#fff;font-weight:normal;-webkit-text-stroke:0.3px #fff;font-size:12px;font-family:'Liberation Sans',sans-serif;letter-spacing:1.2px">15</div></div><div class="a" style="left:217px;top:653px;width:33px;height:33px;background:#085e16"><div class="a" style="left:6px;top:7px;width:21px;height:19px;border-radius:50%;background:#d63a28"></div><div class="a t" style="left:0;top:11px;left:0.5px;width:33px;text-align:center;color:#fff;font-weight:normal;-webkit-text-stroke:0.3px #fff;font-size:12px;font-family:'Liberation Sans',sans-serif;letter-spacing:1.2px">18</div></div><div class="a" style="left:252px;top:653px;width:33px;height:33px;background:#085e16"><div class="a" style="left:6px;top:7px;width:21px;height:19px;border-radius:50%;background:#d63a28"></div><div class="a t" style="left:0;top:11px;left:0.5px;width:33px;text-align:center;color:#fff;font-weight:normal;-webkit-text-stroke:0.3px #fff;font-size:12px;font-family:'Liberation Sans',sans-serif;letter-spacing:1.2px">21</div></div><div class="a" style="left:287px;top:653px;width:33px;height:33px;background:#085e16"><div class="a" style="left:6px;top:7px;width:21px;height:19px;border-radius:50%;background:#000"></div><div class="a t" style="left:0;top:11px;left:0.5px;width:33px;text-align:center;color:#fff;font-weight:normal;-webkit-text-stroke:0.3px #fff;font-size:12px;font-family:'Liberation Sans',sans-serif;letter-spacing:1.2px">24</div></div><div class="a" style="left:322px;top:653px;width:33px;height:33px;background:#085e16"><div class="a" style="left:6px;top:7px;width:21px;height:19px;border-radius:50%;background:#d63a28"></div><div class="a t" style="left:0;top:11px;left:0.5px;width:33px;text-align:center;color:#fff;font-weight:normal;-webkit-text-stroke:0.3px #fff;font-size:12px;font-family:'Liberation Sans',sans-serif;letter-spacing:1.2px">27</div></div><div class="a" style="left:357px;top:653px;width:33px;height:33px;background:#085e16"><div class="a" style="left:6px;top:7px;width:21px;height:19px;border-radius:50%;background:#d63a28"></div><div class="a t" style="left:0;top:11px;left:0.5px;width:33px;text-align:center;color:#fff;font-weight:normal;-webkit-text-stroke:0.3px #fff;font-size:12px;font-family:'Liberation Sans',sans-serif;letter-spacing:1.2px">30</div></div><div class="a" style="left:392px;top:653px;width:33px;height:33px;background:#085e16"><div class="a" style="left:6px;top:7px;width:21px;height:19px;border-radius:50%;background:#000"></div><div class="a t" style="left:0;top:11px;left:0.5px;width:33px;text-align:center;color:#fff;font-weight:normal;-webkit-text-stroke:0.3px #fff;font-size:12px;font-family:'Liberation Sans',sans-serif;letter-spacing:1.2px">33</div></div><div class="a" style="left:427px;top:653px;width:33px;height:33px;background:#085e16"><div class="a" style="left:6px;top:7px;width:21px;height:19px;border-radius:50%;background:#d63a28"></div><div class="a t" style="left:0;top:11px;left:0.5px;width:33px;text-align:center;color:#fff;font-weight:normal;-webkit-text-stroke:0.3px #fff;font-size:12px;font-family:'Liberation Sans',sans-serif;letter-spacing:1.2px">36</div></div><div class="a" style="left:42px;top:688px;width:33px;height:33px;background:#085e16"><div class="a" style="left:6px;top:7px;width:21px;height:19px;border-radius:50%;background:#000"></div><div class="a t" style="left:0;top:11px;left:0.5px;width:33px;text-align:center;color:#fff;font-weight:normal;-webkit-text-stroke:0.3px #fff;font-size:12px;font-family:'Liberation Sans',sans-serif;letter-spacing:1.2px">2</div></div><div class="a" style="left:77px;top:688px;width:33px;height:33px;background:#085e16"><div class="a" style="left:6px;top:7px;width:21px;height:19px;border-radius:50%;background:#d63a28"></div><div class="a t" style="left:0;top:11px;left:0.5px;width:33px;text-align:center;color:#fff;font-weight:normal;-webkit-text-stroke:0.3px #fff;font-size:12px;font-family:'Liberation Sans',sans-serif;letter-spacing:1.2px">5</div></div><div class="a" style="left:112px;top:688px;width:33px;height:33px;background:#085e16"><div class="a" style="left:6px;top:7px;width:21px;height:19px;border-radius:50%;background:#000"></div><div class="a t" style="left:0;top:11px;left:0.5px;width:33px;text-align:center;color:#fff;font-weight:normal;-webkit-text-stroke:0.3px #fff;font-size:12px;font-family:'Liberation Sans',sans-serif;letter-spacing:1.2px">8</div></div><div class="a" style="left:147px;top:688px;width:33px;height:33px;background:#085e16"><div class="a" style="left:6px;top:7px;width:21px;height:19px;border-radius:50%;background:#000"></div><div class="a t" style="left:0;top:11px;left:0.5px;width:33px;text-align:center;color:#fff;font-weight:normal;-webkit-text-stroke:0.3px #fff;font-size:12px;font-family:'Liberation Sans',sans-serif;letter-spacing:1.2px">11</div></div><div class="a" style="left:182px;top:688px;width:33px;height:33px;background:#085e16"><div class="a" style="left:6px;top:7px;width:21px;height:19px;border-radius:50%;background:#d63a28"></div><div class="a t" style="left:0;top:11px;left:0.5px;width:33px;text-align:center;color:#fff;font-weight:normal;-webkit-text-stroke:0.3px #fff;font-size:12px;font-family:'Liberation Sans',sans-serif;letter-spacing:1.2px">14</div></div><div class="a" style="left:217px;top:688px;width:33px;height:33px;background:#085e16"><div class="a" style="left:6px;top:7px;width:21px;height:19px;border-radius:50%;background:#000"></div><div class="a t" style="left:0;top:11px;left:0.5px;width:33px;text-align:center;color:#fff;font-weight:normal;-webkit-text-stroke:0.3px #fff;font-size:12px;font-family:'Liberation Sans',sans-serif;letter-spacing:1.2px">17</div></div><div class="a" style="left:252px;top:688px;width:33px;height:33px;background:#085e16"><div class="a" style="left:6px;top:7px;width:21px;height:19px;border-radius:50%;background:#000"></div><div class="a t" style="left:0;top:11px;left:0.5px;width:33px;text-align:center;color:#fff;font-weight:normal;-webkit-text-stroke:0.3px #fff;font-size:12px;font-family:'Liberation Sans',sans-serif;letter-spacing:1.2px">20</div></div><div class="a" style="left:287px;top:688px;width:33px;height:33px;background:#085e16"><div class="a" style="left:6px;top:7px;width:21px;height:19px;border-radius:50%;background:#d63a28"></div><div class="a t" style="left:0;top:11px;left:0.5px;width:33px;text-align:center;color:#fff;font-weight:normal;-webkit-text-stroke:0.3px #fff;font-size:12px;font-family:'Liberation Sans',sans-serif;letter-spacing:1.2px">23</div></div><div class="a" style="left:322px;top:688px;width:33px;height:33px;background:#085e16"><div class="a" style="left:6px;top:7px;width:21px;height:19px;border-radius:50%;background:#000"></div><div class="a t" style="left:0;top:11px;left:0.5px;width:33px;text-align:center;color:#fff;font-weight:normal;-webkit-text-stroke:0.3px #fff;font-size:12px;font-family:'Liberation Sans',sans-serif;letter-spacing:1.2px">26</div></div><div class="a" style="left:357px;top:688px;width:33px;height:33px;background:#085e16"><div class="a" style="left:6px;top:7px;width:21px;height:19px;border-radius:50%;background:#000"></div><div class="a t" style="left:0;top:11px;left:0.5px;width:33px;text-align:center;color:#fff;font-weight:normal;-webkit-text-stroke:0.3px #fff;font-size:12px;font-family:'Liberation Sans',sans-serif;letter-spacing:1.2px">29</div></div><div class="a" style="left:392px;top:688px;width:33px;height:33px;background:#085e16"><div class="a" style="left:6px;top:7px;width:21px;height:19px;border-radius:50%;background:#d63a28"></div><div class="a t" style="left:0;top:11px;left:0.5px;width:33px;text-align:center;color:#fff;font-weight:normal;-webkit-text-stroke:0.3px #fff;font-size:12px;font-family:'Liberation Sans',sans-serif;letter-spacing:1.2px">32</div></div><div class="a" style="left:427px;top:688px;width:33px;height:33px;background:#085e16"><div class="a" style="left:6px;top:7px;width:21px;height:19px;border-radius:50%;background:#000"></div><div class="a t" style="left:0;top:11px;left:0.5px;width:33px;text-align:center;color:#fff;font-weight:normal;-webkit-text-stroke:0.3px #fff;font-size:12px;font-family:'Liberation Sans',sans-serif;letter-spacing:1.2px">35</div></div><div class="a" style="left:42px;top:723px;width:33px;height:33px;background:#085e16"><div class="a" style="left:6px;top:7px;width:21px;height:19px;border-radius:50%;background:#d63a28"></div><div class="a t" style="left:0;top:11px;left:0.5px;width:33px;text-align:center;color:#fff;font-weight:normal;-webkit-text-stroke:0.3px #fff;font-size:12px;font-family:'Liberation Sans',sans-serif;letter-spacing:1.2px">1</div></div><div class="a" style="left:77px;top:723px;width:33px;height:33px;background:#085e16"><div class="a" style="left:6px;top:7px;width:21px;height:19px;border-radius:50%;background:#000"></div><div class="a t" style="left:0;top:11px;left:0.5px;width:33px;text-align:center;color:#fff;font-weight:normal;-webkit-text-stroke:0.3px #fff;font-size:12px;font-family:'Liberation Sans',sans-serif;letter-spacing:1.2px">4</div></div><div class="a" style="left:112px;top:723px;width:33px;height:33px;background:#085e16"><div class="a" style="left:6px;top:7px;width:21px;height:19px;border-radius:50%;background:#d63a28"></div><div class="a t" style="left:0;top:11px;left:0.5px;width:33px;text-align:center;color:#fff;font-weight:normal;-webkit-text-stroke:0.3px #fff;font-size:12px;font-family:'Liberation Sans',sans-serif;letter-spacing:1.2px">7</div></div><div class="a" style="left:147px;top:723px;width:33px;height:33px;background:#085e16"><div class="a" style="left:6px;top:7px;width:21px;height:19px;border-radius:50%;background:#000"></div><div class="a t" style="left:0;top:11px;left:0.5px;width:33px;text-align:center;color:#fff;font-weight:normal;-webkit-text-stroke:0.3px #fff;font-size:12px;font-family:'Liberation Sans',sans-serif;letter-spacing:1.2px">10</div></div><div class="a" style="left:182px;top:723px;width:33px;height:33px;background:#085e16"><div class="a" style="left:6px;top:7px;width:21px;height:19px;border-radius:50%;background:#000"></div><div class="a t" style="left:0;top:11px;left:0.5px;width:33px;text-align:center;color:#fff;font-weight:normal;-webkit-text-stroke:0.3px #fff;font-size:12px;font-family:'Liberation Sans',sans-serif;letter-spacing:1.2px">13</div></div><div class="a" style="left:217px;top:723px;width:33px;height:33px;background:#085e16"><div class="a" style="left:6px;top:7px;width:21px;height:19px;border-radius:50%;background:#d63a28"></div><div class="a t" style="left:0;top:11px;left:0.5px;width:33px;text-align:center;color:#fff;font-weight:normal;-webkit-text-stroke:0.3px #fff;font-size:12px;font-family:'Liberation Sans',sans-serif;letter-spacing:1.2px">16</div></div><div class="a" style="left:252px;top:723px;width:33px;height:33px;background:#085e16"><div class="a" style="left:6px;top:7px;width:21px;height:19px;border-radius:50%;background:#d63a28"></div><div class="a t" style="left:0;top:11px;left:0.5px;width:33px;text-align:center;color:#fff;font-weight:normal;-webkit-text-stroke:0.3px #fff;font-size:12px;font-family:'Liberation Sans',sans-serif;letter-spacing:1.2px">19</div></div><div class="a" style="left:287px;top:723px;width:33px;height:33px;background:#085e16"><div class="a" style="left:6px;top:7px;width:21px;height:19px;border-radius:50%;background:#000"></div><div class="a t" style="left:0;top:11px;left:0.5px;width:33px;text-align:center;color:#fff;font-weight:normal;-webkit-text-stroke:0.3px #fff;font-size:12px;font-family:'Liberation Sans',sans-serif;letter-spacing:1.2px">22</div></div><div class="a" style="left:322px;top:723px;width:33px;height:33px;background:#085e16"><div class="a" style="left:6px;top:7px;width:21px;height:19px;border-radius:50%;background:#d63a28"></div><div class="a t" style="left:0;top:11px;left:0.5px;width:33px;text-align:center;color:#fff;font-weight:normal;-webkit-text-stroke:0.3px #fff;font-size:12px;font-family:'Liberation Sans',sans-serif;letter-spacing:1.2px">25</div></div><div class="a" style="left:357px;top:723px;width:33px;height:33px;background:#085e16"><div class="a" style="left:6px;top:7px;width:21px;height:19px;border-radius:50%;background:#000"></div><div class="a t" style="left:0;top:11px;left:0.5px;width:33px;text-align:center;color:#fff;font-weight:normal;-webkit-text-stroke:0.3px #fff;font-size:12px;font-family:'Liberation Sans',sans-serif;letter-spacing:1.2px">28</div></div><div class="a" style="left:392px;top:723px;width:33px;height:33px;background:#085e16"><div class="a" style="left:6px;top:7px;width:21px;height:19px;border-radius:50%;background:#000"></div><div class="a t" style="left:0;top:11px;left:0.5px;width:33px;text-align:center;color:#fff;font-weight:normal;-webkit-text-stroke:0.3px #fff;font-size:12px;font-family:'Liberation Sans',sans-serif;letter-spacing:1.2px">31</div></div><div class="a" style="left:427px;top:723px;width:33px;height:33px;background:#085e16"><div class="a" style="left:6px;top:7px;width:21px;height:19px;border-radius:50%;background:#d63a28"></div><div class="a t" style="left:0;top:11px;left:0.5px;width:33px;text-align:center;color:#fff;font-weight:normal;-webkit-text-stroke:0.3px #fff;font-size:12px;font-family:'Liberation Sans',sans-serif;letter-spacing:1.2px">34</div></div>
<div class="a " style="left:7px;top:688px;width:33px;height:33px;background:#085e16"><div class="a" style="left:2px;top:5px;width:29px;height:24px;border:1px dashed #a8eca8;border-radius:50%"></div><div class="a t" style="left:0;top:8px;width:33px;text-align:center;color:#0c5c16;-webkit-text-stroke:1.2px #fff;font-size:19px;transform:scaleX(0.62)">0</div></div>
<div class="a t " style="left:5px;top:777px;font-size:11px;letter-spacing:-0.08px">В последнем спине выпало: 4 черное</div>
<div class="a " style="left:703px;top:769px;width:1px;height:24px;background:#c5c2b2"></div>
<div class="a " style="left:704px;top:769px;width:1px;height:24px;background:#fff"></div>
<div class="a " style="left:822px;top:769px;width:1px;height:24px;background:#c5c2b2"></div>
<div class="a " style="left:823px;top:769px;width:1px;height:24px;background:#fff"></div>
<div class="a t " style="left:708px;top:777px;font-size:11px">Автосмещение : 32</div>
<div class="a t " style="left:827px;top:777px;font-size:11px">Исходное: 23</div>
<div class="a t " style="left:506px;top:33px;font-size:11px;letter-spacing:-0.1px">Ряд Фибоначчи=1 1 2 3 5 8 13 21 34 55 89 144 233 377 610</div>
<div class="a t " style="left:506px;top:49px;font-size:11px;letter-spacing:-0.1px">Ряд Tiers = 5 8 10 11 13 16 23 24 27 30 33 36</div>
<div class="a t " style="left:506px;top:65px;font-size:11px;letter-spacing:-0.1px">Ряд VdZ = 0 2 3 4 7 12 15 18 19 21 22 25 26 28 29 32 35</div>
<div class="a" style="left:0;top:0;width:1023px;height:60px;overflow:hidden">
<div class="a t " style="left:823px;top:33px;font-size:11px;letter-spacing:-0.1px">Ряд Мартингейл=1 2 4 8 16 32 64 128 256</div>
</div>
<div class="a t " style="left:823px;top:49px;font-size:11px;letter-spacing:-0.1px">Ряд Orph = 1 6 9 14 17 20 31 34</div>
<div class="a t " style="left:823px;top:65px;font-size:11px;letter-spacing:-0.1px">Ряд VdZ_zch = 0 3 12 15 26 32 35</div>
<div class="a t " style="left:506px;top:83px;font-size:18px;-webkit-text-stroke:0.35px #000">Сумма на счете = 0</div>
<div class="a " style="left:505px;top:103px;width:171px;height:20px;background:#fff;border:1px solid #7f9db9"></div>
<div class="a t " style="left:508px;top:107.0px;font-size:11.5px">Автоставки</div>
<div class="a dd" style="left:659px;top:105px;width:14px;height:16px;"><svg class="a" style="left:2px;top:5px" width="9" height="6"><path d="M1 1 L4.5 4.5 L8 1" stroke="#4d6185" stroke-width="2" fill="none"/></svg></div>
<div class="a " style="left:686px;top:82px;width:250px;height:40px;border:1px solid #fff;box-shadow:inset 1px 1px 0 #aca899"></div>
<div class="a btn fc" style="left:691px;top:88px;width:87px;height:25px;font-size:11.5px;white-space:nowrap">Автоспин старт</div>
<div class="a t " style="left:783px;top:88px;font-size:11px;line-height:13px">Временная<br>задержка, мс</div>
<div class="a " style="left:854px;top:87px;width:72px;height:32px;background:#c0dcc0;border:1px solid #7f9db9"></div>
<div class="a t " style="left:857px;top:93px;font-size:20px;">0</div>
<div class="a btn" style="left:907px;top:89px;width:17px;height:14px;border-radius:2px"><svg class="a" style="left:3px;top:3px" width="9" height="5"><path d="M0.5 4.5 L4.5 0.5 L8.5 4.5Z" fill="#000"/></svg></div>
<div class="a btn" style="left:907px;top:103px;width:17px;height:14px;border-radius:2px"><svg class="a" style="left:3px;top:3px" width="9" height="5"><path d="M0.5 0.5 L4.5 4.5 L8.5 0.5Z" fill="#000"/></svg></div>
<div class="a " style="left:502px;top:134px;width:521px;height:1px;background:#aca899"></div>
<div class="a " style="left:502px;top:141px;width:521px;height:1px;background:#fff"></div>
<div class="a " style="left:503px;top:161px;width:518px;height:441px;border:1px solid #919b9c;background:#fcfcfe;box-shadow:1px 1px 0 #d8d4c0,2px 3px 0 #c8c4b0"></div>
<div class="a tab" style="left:506px;top:144px;width:70px;height:18px;overflow:hidden"><div class="a t" style="left:0px;top:4px;width:100%;text-align:center;font-size:11px">Анализатор</div></div>
<div class="a tab" style="left:649px;top:144px;width:109px;height:18px;overflow:hidden"><div class="a t" style="left:0px;top:4px;width:100%;text-align:center;font-size:11px">Частоты по числам</div></div>
<div class="a tab" style="left:759px;top:144px;width:131px;height:18px;overflow:hidden"><div class="a t" style="left:0px;top:4px;width:100%;text-align:center;font-size:11px">Функционал PsevdoMS</div></div>
<div class="a tab" style="left:890px;top:144px;width:100px;height:18px;overflow:hidden"><div class="a t" style="left:4px;top:4px;font-size:11px">Контроль банкролла</div></div>
<div class="a tab on" style="left:576px;top:142px;width:73px;height:21px;overflow:hidden"><div class="a t" style="left:0px;top:5px;width:100%;text-align:center;font-size:11px">Автоставки</div></div>
<div class="a " style="left:990px;top:144px;width:32px;height:15px;background:linear-gradient(#d2e0fc,#b6caf6);border-radius:2px"><svg class="a" style="left:5px;top:4px" width="22" height="8"><path d="M1 4 L5 0.5 L5 7.5Z M21 4 L17 0.5 L17 7.5Z" fill="#4d6185"/></svg></div>
<div class="a " style="left:508px;top:186px;width:511px;height:411px;border:1px solid #919b9c;background:#fcfcfe;box-shadow:1px 1px 0 #d8d4c0,2px 3px 0 #c8c4b0"></div>
<div class="a " style="left:989px;top:186px;width:29px;height:1px;background:#fcfcfe"></div>
<div class="a tab" style="left:511px;top:169px;width:82px;height:18px;overflow:hidden"><div class="a t" style="left:0px;top:4px;width:100%;text-align:center;font-size:11px">Общие ставки</div></div>
<div class="a tab" style="left:593px;top:169px;width:43px;height:18px;overflow:hidden"><div class="a t" style="left:0px;top:4px;width:100%;text-align:center;font-size:11px">ПНС</div></div>
<div class="a tab" style="left:731px;top:169px;width:39px;height:18px;overflow:hidden"><div class="a t" style="left:0px;top:4px;width:100%;text-align:center;font-size:11px">Спец</div></div>
<div class="a tab" style="left:771px;top:169px;width:97px;height:18px;overflow:hidden"><div class="a t" style="left:0px;top:4px;width:100%;text-align:center;font-size:11px">Исх. строки МД5</div></div>
<div class="a tab on" style="left:636px;top:166px;width:95px;height:22px;overflow:hidden"><div class="a t" style="left:0px;top:5px;width:100%;text-align:center;font-size:11px">Дополнительно</div></div>
<div class="a " style="left:513px;top:192px;width:500px;height:402px;border:1px solid #7f9db9;background:#ece9d8"></div>
<div class="a " style="left:995px;top:194px;width:17px;height:398px;background:linear-gradient(90deg,#f3f1ec,#fefefe)"></div>
<div class="a " style="left:996px;top:195px;width:15px;height:16px;border:1px solid #fff;border-radius:2px;background:linear-gradient(135deg,#c8d9fc,#b6cbf7 60%,#aac0f3)"><svg class="a" style="left:3px;top:4px" width="9" height="6"><path d="M1 5 L4.5 1.5 L8 5" stroke="#4d6185" stroke-width="2" fill="none"/></svg></div>
<div class="a " style="left:996px;top:575px;width:15px;height:16px;border:1px solid #fff;border-radius:2px;background:linear-gradient(135deg,#c8d9fc,#b6cbf7 60%,#aac0f3)"><svg class="a" style="left:3px;top:4px" width="9" height="6"><path d="M1 1 L4.5 4.5 L8 1" stroke="#4d6185" stroke-width="2" fill="none"/></svg></div>
<div class="a " style="left:996px;top:378px;width:15px;height:197px;border:1px solid #fff;border-radius:2px;background:linear-gradient(90deg,#c9d8fc,#bacefa 50%,#b0c4f6)"><div class="a" style="left:3px;top:94px;width:8px;height:1px;background:#8aa4e0"></div><div class="a" style="left:3px;top:96px;width:8px;height:1px;background:#8aa4e0"></div><div class="a" style="left:3px;top:98px;width:8px;height:1px;background:#8aa4e0"></div><div class="a" style="left:3px;top:100px;width:8px;height:1px;background:#8aa4e0"></div></div>
<div class="a " style="left:515px;top:193px;width:479px;height:86px;border:1px solid #aca899;box-shadow:inset 1px 1px 0 #fff;border-top:none"></div>
<div class="a btn" style="left:519px;top:206px;width:92px;height:35px;"></div>
<svg class="a" style="left:525px;top:215px" width="18" height="18" viewBox="0 0 18 18"><circle cx="9" cy="9" r="8" fill="#12e84a" stroke="#000" stroke-width="2"/><text x="0" y="0" transform="translate(9.2,12.8) scale(0.8,1)" text-anchor="middle" font-family="Liberation Sans" font-size="10" fill="#000">A2</text></svg>
<div class="a t " style="left:535px;top:212px;font-size:11px;line-height:13px"><div style="width:80px;text-align:center">Автоставка<br>сплит</div></div>
<div class="a btn" style="left:619px;top:206px;width:84px;height:35px;"></div>
<svg class="a" style="left:627px;top:215px" width="18" height="18" viewBox="0 0 18 18"><circle cx="9" cy="9" r="8" fill="#12e84a" stroke="#000" stroke-width="2"/><path d="M6 6.5 L9 8 L12 4.5 L14 6 L12 10 L13 11.5 L11 12.5 L8 10Z" fill="#2a3ae8"/><path d="M3.5 10 L6 8.5 L11 12.5 L10 14.5 L7.5 13.5 L6.5 12Z" fill="#f010d8"/></svg>
<div class="a t " style="left:631px;top:212px;font-size:11px;line-height:13px"><div style="width:80px;text-align:center">Очистить<br>все</div></div>
<div class="a btn" style="left:712px;top:206px;width:91px;height:35px;"></div>
<svg class="a" style="left:716px;top:215px" width="18" height="18" viewBox="0 0 18 18"><circle cx="9" cy="9" r="8" fill="#12e84a" stroke="#000" stroke-width="2"/><path d="M2 9.5 H8 M6 7.5 L8 9.5 L6 11.5" stroke="#e82010" stroke-width="1.1" fill="none"/><text x="0" y="0" transform="translate(11.6,13.2) scale(0.6,1)" text-anchor="middle" font-family="Liberation Sans" font-size="11" fill="#000">ПН</text></svg>
<div class="a t " style="left:728px;top:212px;font-size:11px;line-height:13px"><div style="width:80px;text-align:center">Передать в<br>поле ПН</div></div>
<div class="a t " style="left:546px;top:252px;font-size:18px;-webkit-text-stroke:0.35px #000">Доступные фишки</div>
<div class="a " style="left:707px;top:247px;width:97px;height:27px;background:#c0dcc0;border:1px solid #7f9db9;box-shadow:inset 0 0 0 2px #fff"></div>
<div class="a t " style="left:711px;top:251px;font-size:18px"><span style="-webkit-text-stroke:0.35px #000">1cent</span></div>
<div class="a dd" style="left:787px;top:249px;width:15px;height:23px;"><svg class="a" style="left:3px;top:8px" width="9" height="6"><path d="M1 1 L4.5 4.5 L8 1" stroke="#4d6185" stroke-width="2" fill="none"/></svg></div>
<div class="a grp" style="left:811px;top:204px;width:89px;height:47px;"></div>
<div class="a t gl" style="left:819px;top:198px;font-size:11px;line-height:12px;letter-spacing:-0.2px">Коэфф. умнож.</div>
<div class="a " style="left:829px;top:213px;width:58px;height:32px;background:#c0dcc0;border:1px solid #7f9db9"></div>
<div class="a t " style="left:832px;top:218px;font-size:19px;font-weight:bold">1</div>
<div class="a btn" style="left:868px;top:215px;width:17px;height:14px;border-radius:2px"><svg class="a" style="left:3px;top:3px" width="9" height="5"><path d="M0.5 4.5 L4.5 0.5 L8.5 4.5Z" fill="#000"/></svg></div>
<div class="a btn" style="left:868px;top:229px;width:17px;height:14px;border-radius:2px"><svg class="a" style="left:3px;top:3px" width="9" height="5"><path d="M0.5 0.5 L4.5 4.5 L8.5 0.5Z" fill="#000"/></svg></div>
<div class="a " style="left:993px;top:279px;width:1px;height:313px;background:#aca899"></div>
<div class="a " style="left:515px;top:283px;width:424px;height:84px;border:1px solid #aca899;box-shadow:inset 1px 1px 0 #fff"></div>
<div class="a btn" style="left:527px;top:291px;width:92px;height:35px;"></div>
<svg class="a" style="left:533px;top:300px" width="18" height="18" viewBox="0 0 18 18"><circle cx="9" cy="9" r="8" fill="#12e84a" stroke="#000" stroke-width="2"/><text x="0" y="0" transform="translate(9.2,12.8) scale(0.8,1)" text-anchor="middle" font-family="Liberation Sans" font-size="10" fill="#000">A6</text></svg>
<div class="a t " style="left:543px;top:297px;font-size:11px;line-height:13px"><div style="width:80px;text-align:center">Автоставка<br>сиклайн</div></div>
<div class="a btn" style="left:627px;top:291px;width:84px;height:35px;"></div>
<svg class="a" style="left:635px;top:300px" width="18" height="18" viewBox="0 0 18 18"><circle cx="9" cy="9" r="8" fill="#12e84a" stroke="#000" stroke-width="2"/><path d="M6 6.5 L9 8 L12 4.5 L14 6 L12 10 L13 11.5 L11 12.5 L8 10Z" fill="#2a3ae8"/><path d="M3.5 10 L6 8.5 L11 12.5 L10 14.5 L7.5 13.5 L6.5 12Z" fill="#f010d8"/></svg>
<div class="a t " style="left:639px;top:297px;font-size:11px;line-height:13px"><div style="width:80px;text-align:center">Очистить<br>все</div></div>
<div class="a btn" style="left:720px;top:291px;width:91px;height:35px;"></div>
<svg class="a" style="left:724px;top:300px" width="18" height="18" viewBox="0 0 18 18"><circle cx="9" cy="9" r="8" fill="#12e84a" stroke="#000" stroke-width="2"/><path d="M2 9.5 H8 M6 7.5 L8 9.5 L6 11.5" stroke="#e82010" stroke-width="1.1" fill="none"/><text x="0" y="0" transform="translate(11.6,13.2) scale(0.6,1)" text-anchor="middle" font-family="Liberation Sans" font-size="11" fill="#000">ПН</text></svg>
<div class="a t " style="left:736px;top:297px;font-size:11px;line-height:13px"><div style="width:80px;text-align:center">Передать в<br>поле ПН</div></div>
<div class="a t " style="left:554px;top:337px;font-size:18px;-webkit-text-stroke:0.35px #000">Доступные фишки</div>
<div class="a " style="left:715px;top:332px;width:97px;height:27px;background:#c0dcc0;border:1px solid #7f9db9;box-shadow:inset 0 0 0 2px #fff"></div>
<div class="a t " style="left:719px;top:336px;font-size:18px"><span style="-webkit-text-stroke:0.35px #000">1cent</span></div>
<div class="a dd" style="left:795px;top:334px;width:15px;height:23px;"><svg class="a" style="left:3px;top:8px" width="9" height="6"><path d="M1 1 L4.5 4.5 L8 1" stroke="#4d6185" stroke-width="2" fill="none"/></svg></div>
<div class="a grp" style="left:819px;top:297px;width:89px;height:47px;"></div>
<div class="a t gl" style="left:827px;top:291px;font-size:11px;line-height:12px;letter-spacing:-0.2px">Коэфф. умнож.</div>
<div class="a " style="left:837px;top:306px;width:58px;height:32px;background:#c0dcc0;border:1px solid #7f9db9"></div>
<div class="a t " style="left:840px;top:311px;font-size:19px;font-weight:bold">1</div>
<div class="a btn" style="left:876px;top:308px;width:17px;height:14px;border-radius:2px"><svg class="a" style="left:3px;top:3px" width="9" height="5"><path d="M0.5 4.5 L4.5 0.5 L8.5 4.5Z" fill="#000"/></svg></div>
<div class="a btn" style="left:876px;top:322px;width:17px;height:14px;border-radius:2px"><svg class="a" style="left:3px;top:3px" width="9" height="5"><path d="M0.5 0.5 L4.5 4.5 L8.5 0.5Z" fill="#000"/></svg></div>
<div class="a " style="left:515px;top:496px;width:424px;height:87px;border:1px solid #aca899;box-shadow:inset 1px 1px 0 #fff"></div>
<div class="a btn" style="left:519px;top:507px;width:92px;height:35px;"></div>
<svg class="a" style="left:525px;top:516px" width="18" height="18" viewBox="0 0 18 18"><circle cx="9" cy="9" r="8" fill="#12e84a" stroke="#000" stroke-width="2"/><text x="0" y="0" transform="translate(9.2,12.8) scale(0.8,1)" text-anchor="middle" font-family="Liberation Sans" font-size="10" fill="#000">A3</text></svg>
<div class="a t " style="left:535px;top:513px;font-size:11px;line-height:13px"><div style="width:80px;text-align:center">Автоставка<br>стрит</div></div>
<div class="a btn" style="left:619px;top:507px;width:84px;height:35px;"></div>
<svg class="a" style="left:627px;top:516px" width="18" height="18" viewBox="0 0 18 18"><circle cx="9" cy="9" r="8" fill="#12e84a" stroke="#000" stroke-width="2"/><path d="M6 6.5 L9 8 L12 4.5 L14 6 L12 10 L13 11.5 L11 12.5 L8 10Z" fill="#2a3ae8"/><path d="M3.5 10 L6 8.5 L11 12.5 L10 14.5 L7.5 13.5 L6.5 12Z" fill="#f010d8"/></svg>
<div class="a t " style="left:631px;top:513px;font-size:11px;line-height:13px"><div style="width:80px;text-align:center">Очистить<br>все</div></div>
<div class="a btn" style="left:712px;top:507px;width:91px;height:35px;"></div>
<svg class="a" style="left:716px;top:516px" width="18" height="18" viewBox="0 0 18 18"><circle cx="9" cy="9" r="8" fill="#12e84a" stroke="#000" stroke-width="2"/><path d="M2 9.5 H8 M6 7.5 L8 9.5 L6 11.5" stroke="#e82010" stroke-width="1.1" fill="none"/><text x="0" y="0" transform="translate(11.6,13.2) scale(0.6,1)" text-anchor="middle" font-family="Liberation Sans" font-size="11" fill="#000">ПН</text></svg>
<div class="a t " style="left:728px;top:513px;font-size:11px;line-height:13px"><div style="width:80px;text-align:center">Передать в<br>поле ПН</div></div>
<div class="a t " style="left:546px;top:553px;font-size:18px;-webkit-text-stroke:0.35px #000">Доступные фишки</div>
<div class="a " style="left:707px;top:548px;width:97px;height:27px;background:#c0dcc0;border:1px solid #7f9db9;box-shadow:inset 0 0 0 2px #fff"></div>
<div class="a t " style="left:711px;top:552px;font-size:18px"><span style="-webkit-text-stroke:0.35px #000">1cent</span></div>
<div class="a dd" style="left:787px;top:550px;width:15px;height:23px;"><svg class="a" style="left:3px;top:8px" width="9" height="6"><path d="M1 1 L4.5 4.5 L8 1" stroke="#4d6185" stroke-width="2" fill="none"/></svg></div>
<div class="a grp" style="left:811px;top:513px;width:89px;height:47px;"></div>
<div class="a t gl" style="left:819px;top:507px;font-size:11px;line-height:12px;letter-spacing:-0.2px">Коэфф. умнож.</div>
<div class="a " style="left:829px;top:522px;width:58px;height:32px;background:#c0dcc0;border:1px solid #7f9db9"></div>
<div class="a t " style="left:832px;top:527px;font-size:19px;font-weight:bold">1</div>
<div class="a btn" style="left:868px;top:524px;width:17px;height:14px;border-radius:2px"><svg class="a" style="left:3px;top:3px" width="9" height="5"><path d="M0.5 4.5 L4.5 0.5 L8.5 4.5Z" fill="#000"/></svg></div>
<div class="a btn" style="left:868px;top:538px;width:17px;height:14px;border-radius:2px"><svg class="a" style="left:3px;top:3px" width="9" height="5"><path d="M0.5 0.5 L4.5 4.5 L8.5 0.5Z" fill="#000"/></svg></div>
<div class="a " style="left:572px;top:192px;width:39px;height:5px;border:1px solid #a0bce8;border-top:none;background:#fff"><div class="a" style="left:14px;top:0;width:12px;height:3px;border:1px solid #1c5180;border-top:none"></div></div>
<div class="a " style="left:708px;top:192px;width:39px;height:5px;border:1px solid #a0bce8;border-top:none;background:#fff"><div class="a" style="left:14px;top:0;width:12px;height:3px;border:1px solid #1c5180;border-top:none"></div></div>
<div class="a " style="left:852px;top:192px;width:39px;height:5px;border:1px solid #a0bce8;border-top:none;background:#fff"><div class="a" style="left:14px;top:0;width:12px;height:3px;border:1px solid #1c5180;border-top:none"></div></div>
<div class="a " style="left:515px;top:375px;width:424px;height:109px;background:#a6caf0"></div>
<div class="a" style="left:518px;top:379px;width:33px;height:33px;background:#085e16"><div class="a" style="left:6px;top:7px;width:21px;height:19px;border-radius:50%;background:#d63a28"></div><div class="a t" style="left:0;top:11px;left:0.5px;width:33px;text-align:center;color:#fff;font-weight:normal;-webkit-text-stroke:0.3px #fff;font-size:12px;font-family:'Liberation Sans',sans-serif;letter-spacing:1.2px">3</div></div><div class="a" style="left:553px;top:379px;width:33px;height:33px;background:#085e16"><div class="a" style="left:6px;top:7px;width:21px;height:19px;border-radius:50%;background:#000"></div><div class="a t" style="left:0;top:11px;left:0.5px;width:33px;text-align:center;color:#fff;font-weight:normal;-webkit-text-stroke:0.3px #fff;font-size:12px;font-family:'Liberation Sans',sans-serif;letter-spacing:1.2px">6</div></div><div class="a" style="left:588px;top:379px;width:33px;height:33px;background:#085e16"><div class="a" style="left:6px;top:7px;width:21px;height:19px;border-radius:50%;background:#d63a28"></div><div class="a t" style="left:0;top:11px;left:0.5px;width:33px;text-align:center;color:#fff;font-weight:normal;-webkit-text-stroke:0.3px #fff;font-size:12px;font-family:'Liberation Sans',sans-serif;letter-spacing:1.2px">9</div></div><div class="a" style="left:623px;top:379px;width:33px;height:33px;background:#085e16"><div class="a" style="left:6px;top:7px;width:21px;height:19px;border-radius:50%;background:#d63a28"></div><div class="a t" style="left:0;top:11px;left:0.5px;width:33px;text-align:center;color:#fff;font-weight:normal;-webkit-text-stroke:0.3px #fff;font-size:12px;font-family:'Liberation Sans',sans-serif;letter-spacing:1.2px">12</div></div><div class="a" style="left:658px;top:379px;width:33px;height:33px;background:#085e16"><div class="a" style="left:6px;top:7px;width:21px;height:19px;border-radius:50%;background:#000"></div><div class="a t" style="left:0;top:11px;left:0.5px;width:33px;text-align:center;color:#fff;font-weight:normal;-webkit-text-stroke:0.3px #fff;font-size:12px;font-family:'Liberation Sans',sans-serif;letter-spacing:1.2px">15</div></div><div class="a" style="left:693px;top:379px;width:33px;height:33px;background:#085e16"><div class="a" style="left:6px;top:7px;width:21px;height:19px;border-radius:50%;background:#d63a28"></div><div class="a t" style="left:0;top:11px;left:0.5px;width:33px;text-align:center;color:#fff;font-weight:normal;-webkit-text-stroke:0.3px #fff;font-size:12px;font-family:'Liberation Sans',sans-serif;letter-spacing:1.2px">18</div></div><div class="a" style="left:728px;top:379px;width:33px;height:33px;background:#085e16"><div class="a" style="left:6px;top:7px;width:21px;height:19px;border-radius:50%;background:#d63a28"></div><div class="a t" style="left:0;top:11px;left:0.5px;width:33px;text-align:center;color:#fff;font-weight:normal;-webkit-text-stroke:0.3px #fff;font-size:12px;font-family:'Liberation Sans',sans-serif;letter-spacing:1.2px">21</div></div><div class="a" style="left:763px;top:379px;width:33px;height:33px;background:#085e16"><div class="a" style="left:6px;top:7px;width:21px;height:19px;border-radius:50%;background:#000"></div><div class="a t" style="left:0;top:11px;left:0.5px;width:33px;text-align:center;color:#fff;font-weight:normal;-webkit-text-stroke:0.3px #fff;font-size:12px;font-family:'Liberation Sans',sans-serif;letter-spacing:1.2px">24</div></div><div class="a" style="left:798px;top:379px;width:33px;height:33px;background:#085e16"><div class="a" style="left:6px;top:7px;width:21px;height:19px;border-radius:50%;background:#d63a28"></div><div class="a t" style="left:0;top:11px;left:0.5px;width:33px;text-align:center;color:#fff;font-weight:normal;-webkit-text-stroke:0.3px #fff;font-size:12px;font-family:'Liberation Sans',sans-serif;letter-spacing:1.2px">27</div></div><div class="a" style="left:833px;top:379px;width:33px;height:33px;background:#085e16"><div class="a" style="left:6px;top:7px;width:21px;height:19px;border-radius:50%;background:#d63a28"></div><div class="a t" style="left:0;top:11px;left:0.5px;width:33px;text-align:center;color:#fff;font-weight:normal;-webkit-text-stroke:0.3px #fff;font-size:12px;font-family:'Liberation Sans',sans-serif;letter-spacing:1.2px">30</div></div><div class="a" style="left:868px;top:379px;width:33px;height:33px;background:#085e16"><div class="a" style="left:6px;top:7px;width:21px;height:19px;border-radius:50%;background:#000"></div><div class="a t" style="left:0;top:11px;left:0.5px;width:33px;text-align:center;color:#fff;font-weight:normal;-webkit-text-stroke:0.3px #fff;font-size:12px;font-family:'Liberation Sans',sans-serif;letter-spacing:1.2px">33</div></div><div class="a" style="left:903px;top:379px;width:33px;height:33px;background:#085e16"><div class="a" style="left:6px;top:7px;width:21px;height:19px;border-radius:50%;background:#d63a28"></div><div class="a t" style="left:0;top:11px;left:0.5px;width:33px;text-align:center;color:#fff;font-weight:normal;-webkit-text-stroke:0.3px #fff;font-size:12px;font-family:'Liberation Sans',sans-serif;letter-spacing:1.2px">36</div></div><div class="a" style="left:518px;top:414px;width:33px;height:33px;background:#085e16"><div class="a" style="left:6px;top:7px;width:21px;height:19px;border-radius:50%;background:#000"></div><div class="a t" style="left:0;top:11px;left:0.5px;width:33px;text-align:center;color:#fff;font-weight:normal;-webkit-text-stroke:0.3px #fff;font-size:12px;font-family:'Liberation Sans',sans-serif;letter-spacing:1.2px">2</div></div><div class="a" style="left:553px;top:414px;width:33px;height:33px;background:#085e16"><div class="a" style="left:6px;top:7px;width:21px;height:19px;border-radius:50%;background:#d63a28"></div><div class="a t" style="left:0;top:11px;left:0.5px;width:33px;text-align:center;color:#fff;font-weight:normal;-webkit-text-stroke:0.3px #fff;font-size:12px;font-family:'Liberation Sans',sans-serif;letter-spacing:1.2px">5</div></div><div class="a" style="left:588px;top:414px;width:33px;height:33px;background:#085e16"><div class="a" style="left:6px;top:7px;width:21px;height:19px;border-radius:50%;background:#000"></div><div class="a t" style="left:0;top:11px;left:0.5px;width:33px;text-align:center;color:#fff;font-weight:normal;-webkit-text-stroke:0.3px #fff;font-size:12px;font-family:'Liberation Sans',sans-serif;letter-spacing:1.2px">8</div></div><div class="a" style="left:623px;top:414px;width:33px;height:33px;background:#085e16"><div class="a" style="left:6px;top:7px;width:21px;height:19px;border-radius:50%;background:#000"></div><div class="a t" style="left:0;top:11px;left:0.5px;width:33px;text-align:center;color:#fff;font-weight:normal;-webkit-text-stroke:0.3px #fff;font-size:12px;font-family:'Liberation Sans',sans-serif;letter-spacing:1.2px">11</div></div><div class="a" style="left:658px;top:414px;width:33px;height:33px;background:#085e16"><div class="a" style="left:6px;top:7px;width:21px;height:19px;border-radius:50%;background:#d63a28"></div><div class="a t" style="left:0;top:11px;left:0.5px;width:33px;text-align:center;color:#fff;font-weight:normal;-webkit-text-stroke:0.3px #fff;font-size:12px;font-family:'Liberation Sans',sans-serif;letter-spacing:1.2px">14</div></div><div class="a" style="left:693px;top:414px;width:33px;height:33px;background:#085e16"><div class="a" style="left:6px;top:7px;width:21px;height:19px;border-radius:50%;background:#000"></div><div class="a t" style="left:0;top:11px;left:0.5px;width:33px;text-align:center;color:#fff;font-weight:normal;-webkit-text-stroke:0.3px #fff;font-size:12px;font-family:'Liberation Sans',sans-serif;letter-spacing:1.2px">17</div></div><div class="a" style="left:728px;top:414px;width:33px;height:33px;background:#085e16"><div class="a" style="left:6px;top:7px;width:21px;height:19px;border-radius:50%;background:#000"></div><div class="a t" style="left:0;top:11px;left:0.5px;width:33px;text-align:center;color:#fff;font-weight:normal;-webkit-text-stroke:0.3px #fff;font-size:12px;font-family:'Liberation Sans',sans-serif;letter-spacing:1.2px">20</div></div><div class="a" style="left:763px;top:414px;width:33px;height:33px;background:#085e16"><div class="a" style="left:6px;top:7px;width:21px;height:19px;border-radius:50%;background:#d63a28"></div><div class="a t" style="left:0;top:11px;left:0.5px;width:33px;text-align:center;color:#fff;font-weight:normal;-webkit-text-stroke:0.3px #fff;font-size:12px;font-family:'Liberation Sans',sans-serif;letter-spacing:1.2px">23</div></div><div class="a" style="left:798px;top:414px;width:33px;height:33px;background:#085e16"><div class="a" style="left:6px;top:7px;width:21px;height:19px;border-radius:50%;background:#000"></div><div class="a t" style="left:0;top:11px;left:0.5px;width:33px;text-align:center;color:#fff;font-weight:normal;-webkit-text-stroke:0.3px #fff;font-size:12px;font-family:'Liberation Sans',sans-serif;letter-spacing:1.2px">26</div></div><div class="a" style="left:833px;top:414px;width:33px;height:33px;background:#085e16"><div class="a" style="left:6px;top:7px;width:21px;height:19px;border-radius:50%;background:#000"></div><div class="a t" style="left:0;top:11px;left:0.5px;width:33px;text-align:center;color:#fff;font-weight:normal;-webkit-text-stroke:0.3px #fff;font-size:12px;font-family:'Liberation Sans',sans-serif;letter-spacing:1.2px">29</div></div><div class="a" style="left:868px;top:414px;width:33px;height:33px;background:#085e16"><div class="a" style="left:6px;top:7px;width:21px;height:19px;border-radius:50%;background:#d63a28"></div><div class="a t" style="left:0;top:11px;left:0.5px;width:33px;text-align:center;color:#fff;font-weight:normal;-webkit-text-stroke:0.3px #fff;font-size:12px;font-family:'Liberation Sans',sans-serif;letter-spacing:1.2px">32</div></div><div class="a" style="left:903px;top:414px;width:33px;height:33px;background:#085e16"><div class="a" style="left:6px;top:7px;width:21px;height:19px;border-radius:50%;background:#000"></div><div class="a t" style="left:0;top:11px;left:0.5px;width:33px;text-align:center;color:#fff;font-weight:normal;-webkit-text-stroke:0.3px #fff;font-size:12px;font-family:'Liberation Sans',sans-serif;letter-spacing:1.2px">35</div></div><div class="a" style="left:518px;top:449px;width:33px;height:33px;background:#085e16"><div class="a" style="left:6px;top:7px;width:21px;height:19px;border-radius:50%;background:#d63a28"></div><div class="a t" style="left:0;top:11px;left:0.5px;width:33px;text-align:center;color:#fff;font-weight:normal;-webkit-text-stroke:0.3px #fff;font-size:12px;font-family:'Liberation Sans',sans-serif;letter-spacing:1.2px">1</div></div><div class="a" style="left:553px;top:449px;width:33px;height:33px;background:#085e16"><div class="a" style="left:6px;top:7px;width:21px;height:19px;border-radius:50%;background:#000"></div><div class="a t" style="left:0;top:11px;left:0.5px;width:33px;text-align:center;color:#fff;font-weight:normal;-webkit-text-stroke:0.3px #fff;font-size:12px;font-family:'Liberation Sans',sans-serif;letter-spacing:1.2px">4</div></div><div class="a" style="left:588px;top:449px;width:33px;height:33px;background:#085e16"><div class="a" style="left:6px;top:7px;width:21px;height:19px;border-radius:50%;background:#d63a28"></div><div class="a t" style="left:0;top:11px;left:0.5px;width:33px;text-align:center;color:#fff;font-weight:normal;-webkit-text-stroke:0.3px #fff;font-size:12px;font-family:'Liberation Sans',sans-serif;letter-spacing:1.2px">7</div></div><div class="a" style="left:623px;top:449px;width:33px;height:33px;background:#085e16"><div class="a" style="left:6px;top:7px;width:21px;height:19px;border-radius:50%;background:#000"></div><div class="a t" style="left:0;top:11px;left:0.5px;width:33px;text-align:center;color:#fff;font-weight:normal;-webkit-text-stroke:0.3px #fff;font-size:12px;font-family:'Liberation Sans',sans-serif;letter-spacing:1.2px">10</div></div><div class="a" style="left:658px;top:449px;width:33px;height:33px;background:#085e16"><div class="a" style="left:6px;top:7px;width:21px;height:19px;border-radius:50%;background:#000"></div><div class="a t" style="left:0;top:11px;left:0.5px;width:33px;text-align:center;color:#fff;font-weight:normal;-webkit-text-stroke:0.3px #fff;font-size:12px;font-family:'Liberation Sans',sans-serif;letter-spacing:1.2px">13</div></div><div class="a" style="left:693px;top:449px;width:33px;height:33px;background:#085e16"><div class="a" style="left:6px;top:7px;width:21px;height:19px;border-radius:50%;background:#d63a28"></div><div class="a t" style="left:0;top:11px;left:0.5px;width:33px;text-align:center;color:#fff;font-weight:normal;-webkit-text-stroke:0.3px #fff;font-size:12px;font-family:'Liberation Sans',sans-serif;letter-spacing:1.2px">16</div></div><div class="a" style="left:728px;top:449px;width:33px;height:33px;background:#085e16"><div class="a" style="left:6px;top:7px;width:21px;height:19px;border-radius:50%;background:#d63a28"></div><div class="a t" style="left:0;top:11px;left:0.5px;width:33px;text-align:center;color:#fff;font-weight:normal;-webkit-text-stroke:0.3px #fff;font-size:12px;font-family:'Liberation Sans',sans-serif;letter-spacing:1.2px">19</div></div><div class="a" style="left:763px;top:449px;width:33px;height:33px;background:#085e16"><div class="a" style="left:6px;top:7px;width:21px;height:19px;border-radius:50%;background:#000"></div><div class="a t" style="left:0;top:11px;left:0.5px;width:33px;text-align:center;color:#fff;font-weight:normal;-webkit-text-stroke:0.3px #fff;font-size:12px;font-family:'Liberation Sans',sans-serif;letter-spacing:1.2px">22</div></div><div class="a" style="left:798px;top:449px;width:33px;height:33px;background:#085e16"><div class="a" style="left:6px;top:7px;width:21px;height:19px;border-radius:50%;background:#d63a28"></div><div class="a t" style="left:0;top:11px;left:0.5px;width:33px;text-align:center;color:#fff;font-weight:normal;-webkit-text-stroke:0.3px #fff;font-size:12px;font-family:'Liberation Sans',sans-serif;letter-spacing:1.2px">25</div></div><div class="a" style="left:833px;top:449px;width:33px;height:33px;background:#085e16"><div class="a" style="left:6px;top:7px;width:21px;height:19px;border-radius:50%;background:#000"></div><div class="a t" style="left:0;top:11px;left:0.5px;width:33px;text-align:center;color:#fff;font-weight:normal;-webkit-text-stroke:0.3px #fff;font-size:12px;font-family:'Liberation Sans',sans-serif;letter-spacing:1.2px">28</div></div><div class="a" style="left:868px;top:449px;width:33px;height:33px;background:#085e16"><div class="a" style="left:6px;top:7px;width:21px;height:19px;border-radius:50%;background:#000"></div><div class="a t" style="left:0;top:11px;left:0.5px;width:33px;text-align:center;color:#fff;font-weight:normal;-webkit-text-stroke:0.3px #fff;font-size:12px;font-family:'Liberation Sans',sans-serif;letter-spacing:1.2px">31</div></div><div class="a" style="left:903px;top:449px;width:33px;height:33px;background:#085e16"><div class="a" style="left:6px;top:7px;width:21px;height:19px;border-radius:50%;background:#d63a28"></div><div class="a t" style="left:0;top:11px;left:0.5px;width:33px;text-align:center;color:#fff;font-weight:normal;-webkit-text-stroke:0.3px #fff;font-size:12px;font-family:'Liberation Sans',sans-serif;letter-spacing:1.2px">34</div></div>
<div class="a " style="left:542px;top:369px;width:20px;height:17px;border:1px solid #a0bce8;background:#fff"><div class="a" style="left:3px;top:1px;width:13px;height:13px;border:1px solid #1c5180;background:linear-gradient(135deg,#dcdad0,#fbfbf8)"></div></div>
<div class="a " style="left:612px;top:369px;width:20px;height:17px;border:1px solid #a0bce8;background:#fff"><div class="a" style="left:3px;top:1px;width:13px;height:13px;border:1px solid #1c5180;background:linear-gradient(135deg,#dcdad0,#fbfbf8)"></div></div>
<div class="a " style="left:682px;top:369px;width:20px;height:17px;border:1px solid #a0bce8;background:#fff"><div class="a" style="left:3px;top:1px;width:13px;height:13px;border:1px solid #1c5180;background:linear-gradient(135deg,#dcdad0,#fbfbf8)"></div></div>
<div class="a " style="left:752px;top:369px;width:20px;height:17px;border:1px solid #a0bce8;background:#fff"><div class="a" style="left:3px;top:1px;width:13px;height:13px;border:1px solid #1c5180;background:linear-gradient(135deg,#dcdad0,#fbfbf8)"></div></div>
<div class="a " style="left:822px;top:369px;width:20px;height:17px;border:1px solid #a0bce8;background:#fff"><div class="a" style="left:3px;top:1px;width:13px;height:13px;border:1px solid #1c5180;background:linear-gradient(135deg,#dcdad0,#fbfbf8)"></div></div>
<div class="a " style="left:892px;top:369px;width:20px;height:17px;border:1px solid #a0bce8;background:#fff"><div class="a" style="left:3px;top:1px;width:13px;height:13px;border:1px solid #1c5180;background:linear-gradient(135deg,#dcdad0,#fbfbf8)"></div></div>
<div class="a " style="left:525px;top:476px;width:20px;height:17px;border:1px solid #a0bce8;background:#fff"><div class="a" style="left:3px;top:1px;width:13px;height:13px;border:1px solid #1c5180;background:linear-gradient(135deg,#dcdad0,#fbfbf8)"></div></div>
<div class="a " style="left:562px;top:476px;width:20px;height:17px;border:1px solid #a0bce8;background:#fff"><div class="a" style="left:3px;top:1px;width:13px;height:13px;border:1px solid #1c5180;background:linear-gradient(135deg,#dcdad0,#fbfbf8)"></div></div>
<div class="a " style="left:593px;top:476px;width:20px;height:17px;border:1px solid #a0bce8;background:#fff"><div class="a" style="left:3px;top:1px;width:13px;height:13px;border:1px solid #1c5180;background:linear-gradient(135deg,#dcdad0,#fbfbf8)"></div></div>
<div class="a " style="left:631px;top:476px;width:20px;height:17px;border:1px solid #a0bce8;background:#fff"><div class="a" style="left:3px;top:1px;width:13px;height:13px;border:1px solid #1c5180;background:linear-gradient(135deg,#dcdad0,#fbfbf8)"></div></div>
<div class="a " style="left:662px;top:476px;width:20px;height:17px;border:1px solid #a0bce8;background:#fff"><div class="a" style="left:3px;top:1px;width:13px;height:13px;border:1px solid #1c5180;background:linear-gradient(135deg,#dcdad0,#fbfbf8)"></div></div>
<div class="a " style="left:699px;top:476px;width:20px;height:17px;border:1px solid #a0bce8;background:#fff"><div class="a" style="left:3px;top:1px;width:13px;height:13px;border:1px solid #1c5180;background:linear-gradient(135deg,#dcdad0,#fbfbf8)"></div></div>
<div class="a " style="left:733px;top:476px;width:20px;height:17px;border:1px solid #a0bce8;background:#fff"><div class="a" style="left:3px;top:1px;width:13px;height:13px;border:1px solid #1c5180;background:linear-gradient(135deg,#dcdad0,#fbfbf8)"></div></div>
<div class="a " style="left:770px;top:476px;width:20px;height:17px;border:1px solid #a0bce8;background:#fff"><div class="a" style="left:3px;top:1px;width:13px;height:13px;border:1px solid #1c5180;background:linear-gradient(135deg,#dcdad0,#fbfbf8)"></div></div>
<div class="a " style="left:801px;top:476px;width:20px;height:17px;border:1px solid #a0bce8;background:#fff"><div class="a" style="left:3px;top:1px;width:13px;height:13px;border:1px solid #1c5180;background:linear-gradient(135deg,#dcdad0,#fbfbf8)"></div></div>
<div class="a " style="left:839px;top:476px;width:20px;height:17px;border:1px solid #a0bce8;background:#fff"><div class="a" style="left:3px;top:1px;width:13px;height:13px;border:1px solid #1c5180;background:linear-gradient(135deg,#dcdad0,#fbfbf8)"></div></div>
<div class="a " style="left:870px;top:476px;width:20px;height:17px;border:1px solid #a0bce8;background:#fff"><div class="a" style="left:3px;top:1px;width:13px;height:13px;border:1px solid #1c5180;background:linear-gradient(135deg,#dcdad0,#fbfbf8)"></div></div>
<div class="a " style="left:907px;top:476px;width:20px;height:17px;border:1px solid #a0bce8;background:#fff"><div class="a" style="left:3px;top:1px;width:13px;height:13px;border:1px solid #1c5180;background:linear-gradient(135deg,#dcdad0,#fbfbf8)"></div></div>
<div class="a " style="left:503px;top:625px;width:518px;height:136px;border:1px solid #919b9c;background:linear-gradient(#fcfcfe,#f4f3ee);box-shadow:1px 1px 0 #d8d4c0,2px 2px 0 #c8c4b0"></div>
<div class="a tab" style="left:505px;top:608px;width:220px;height:18px;overflow:hidden"><div class="a t" style="left:0px;top:4px;width:100%;text-align:center;font-size:11px">Частота - Zero, шансы, дюжины, колонки</div></div>
<div class="a tab" style="left:726px;top:608px;width:159px;height:18px;overflow:hidden"><div class="a t" style="left:0px;top:4px;width:100%;text-align:center;font-size:11px">Частота - сиклайны, сектора</div></div>
<div class="a tab on" style="left:885px;top:606px;width:44px;height:20px;overflow:hidden"><div class="a t" style="left:0px;top:4px;width:100%;text-align:center;font-size:11px">MD5</div></div>
<div class="a btn fc" style="left:508px;top:636px;width:71px;height:89px;font-size:11px;line-height:13px"><div style="padding-top:4px">Очистка<br>Вставка<br>Расчет MD5</div></div>
<div class="a btn fc" style="left:583px;top:636px;width:79px;height:18px;font-size:11px;line-height:13px">Очистить</div>
<div class="a btn fc" style="left:583px;top:660px;width:79px;height:30px;font-size:11px;line-height:13px"><div style="padding-top:3px">Очистить и<br>вставить</div></div>
<div class="a btn fc" style="left:583px;top:695px;width:79px;height:31px;font-size:11px;line-height:13px">Расчет MD5</div>
<div class="a btn fc" style="left:511px;top:731px;width:148px;height:28px;font-size:11px;line-height:13px"><div style="padding-top:3px">Очистить и &nbsp;вставить<br>во вспом. строку</div></div>
<div class="a t " style="left:667px;top:632px;font-size:11px">Исходная строка</div>
<div class="a edit" style="left:667px;top:646px;width:285px;height:21px;"></div>
<div class="a t " style="left:667px;top:677px;font-size:11px">Выходная строка MD5</div>
<div class="a " style="left:803px;top:672px;width:13px;height:13px;border:1px solid #1c5180;background:linear-gradient(135deg,#dcdad0,#fbfbf8)"></div>
<div class="a t " style="left:819px;top:674px;font-size:11px">регистр &nbsp;- маленький</div>
<div class="a edit" style="left:667px;top:691px;width:285px;height:21px;"></div>
<div class="a t " style="left:667px;top:716px;font-size:11px">Вспомогательная строка: сюда можно все скопировать</div>
<div class="a edit" style="left:667px;top:731px;width:285px;height:21px;"></div>
<div class="a btn" style="left:956px;top:647px;width:23px;height:24px;"><svg class="a" style="left:2px;top:2px" width="18" height="18" viewBox="0 0 18 18"><circle cx="9" cy="9" r="8" fill="#12e84a" stroke="#000" stroke-width="2"/><text x="0" y="0" transform="translate(9,8.4) scale(0.9,1)" text-anchor="middle" font-family="Liberation Sans" font-size="6.5" fill="#000">МД</text><text x="9" y="14.6" text-anchor="middle" font-family="Liberation Sans" font-size="7.5" fill="#000">5</text></svg></div>
<div class="a btn" style="left:956px;top:727px;width:23px;height:24px;"><svg class="a" style="left:2px;top:2px" width="18" height="18" viewBox="0 0 18 18"><circle cx="9" cy="9" r="8" fill="#12e84a" stroke="#000" stroke-width="2"/><text x="0" y="0" transform="translate(9,8.4) scale(0.9,1)" text-anchor="middle" font-family="Liberation Sans" font-size="6.5" fill="#000">МД</text><text x="7.5" y="14.6" text-anchor="middle" font-family="Liberation Sans" font-size="7.5" fill="#000">5</text><path d="M10.5 10 L14 12.5 L10.5 15Z" fill="#2030e0"/></svg></div>
<div class="a " style="left:1021px;top:783px;width:2px;height:2px;background:#aca899;box-shadow:1px 1px 0 #fff"></div>
<div class="a " style="left:1017px;top:787px;width:2px;height:2px;background:#aca899;box-shadow:1px 1px 0 #fff"></div>
<div class="a " style="left:1021px;top:787px;width:2px;height:2px;background:#aca899;box-shadow:1px 1px 0 #fff"></div>
<div class="a " style="left:1013px;top:791px;width:2px;height:2px;background:#aca899;box-shadow:1px 1px 0 #fff"></div>
<div class="a " style="left:1017px;top:791px;width:2px;height:2px;background:#aca899;box-shadow:1px 1px 0 #fff"></div>
<div class="a " style="left:1021px;top:791px;width:2px;height:2px;background:#aca899;box-shadow:1px 1px 0 #fff"></div>
<div class="a " style="left:500px;top:764px;width:525px;height:2px;background:#aca899"></div>
<div class="a " style="left:1023px;top:30px;width:2px;height:736px;background:#aca899"></div></body></html>
